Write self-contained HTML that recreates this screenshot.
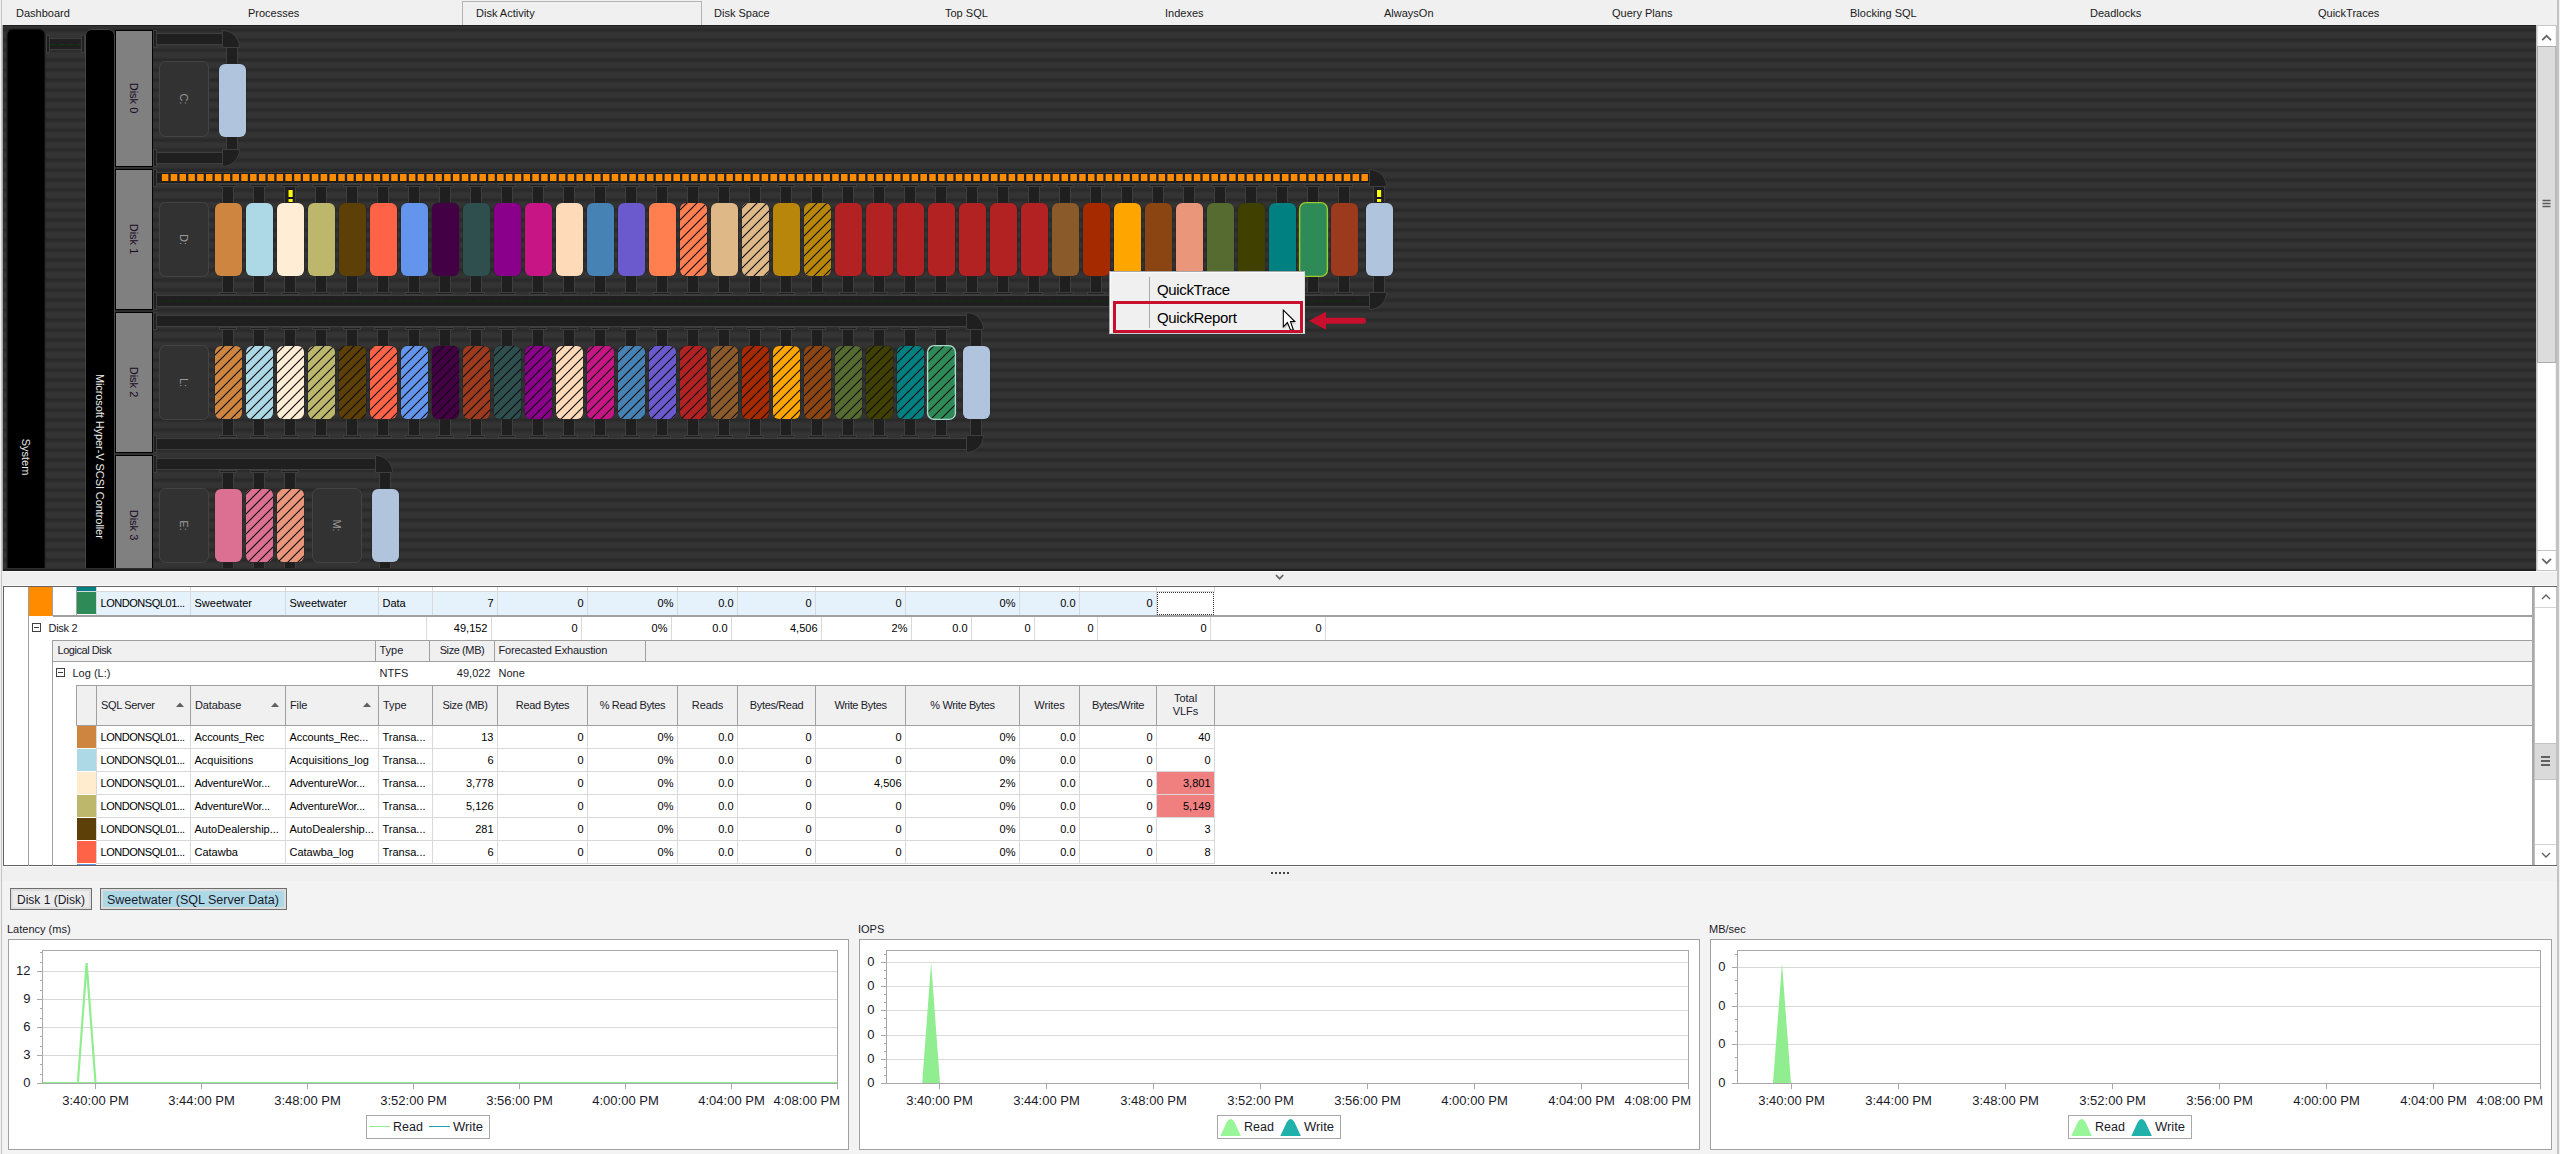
<!DOCTYPE html>
<html><head><meta charset="utf-8">
<style>
html,body{margin:0;padding:0;}
body{width:2560px;height:1154px;overflow:hidden;position:relative;background:#f0f0f0;font-family:'Liberation Sans', sans-serif;}
.t{position:absolute;white-space:nowrap;line-height:1;}
.r{text-align:right;}
.c{text-align:center;}
svg text{font-family:'Liberation Sans', sans-serif;}
</style></head><body>

<div style="position:absolute;left:0;top:0;width:2560px;height:25px;background:#f0f0f0"></div>
<div style="position:absolute;left:462px;top:1px;width:238px;height:24px;border:1px solid #b4b4b4;border-bottom:none;background:#f0f0f0"></div>
<div class="t" style="left:16px;top:8px;font-size:11px;color:#1a1a1a">Dashboard</div>
<div class="t" style="left:248px;top:8px;font-size:11px;color:#1a1a1a">Processes</div>
<div class="t" style="left:476px;top:8px;font-size:11px;color:#1a1a1a">Disk Activity</div>
<div class="t" style="left:714px;top:8px;font-size:11px;color:#1a1a1a">Disk Space</div>
<div class="t" style="left:945px;top:8px;font-size:11px;color:#1a1a1a">Top SQL</div>
<div class="t" style="left:1165px;top:8px;font-size:11px;color:#1a1a1a">Indexes</div>
<div class="t" style="left:1384px;top:8px;font-size:11px;color:#1a1a1a">AlwaysOn</div>
<div class="t" style="left:1612px;top:8px;font-size:11px;color:#1a1a1a">Query Plans</div>
<div class="t" style="left:1850px;top:8px;font-size:11px;color:#1a1a1a">Blocking SQL</div>
<div class="t" style="left:2090px;top:8px;font-size:11px;color:#1a1a1a">Deadlocks</div>
<div class="t" style="left:2318px;top:8px;font-size:11px;color:#1a1a1a">QuickTraces</div>
<div style="position:absolute;left:1px;top:0;width:1px;height:1154px;background:#c4c4c4"></div>
<div style="position:absolute;left:2557px;top:0;width:2px;height:1154px;background:#c4c4c4"></div>
<svg style="position:absolute;left:0;top:0" width="2560" height="571" viewBox="0 0 2560 571">
<defs>
<linearGradient id="stripe" x1="0" y1="0" x2="0" y2="1"><stop offset="0" stop-color="#343434"/><stop offset="0.2" stop-color="#333333"/><stop offset="0.5" stop-color="#282828"/><stop offset="0.8" stop-color="#333333"/><stop offset="1" stop-color="#343434"/></linearGradient>
<pattern id="stripes" patternUnits="userSpaceOnUse" x="0" y="25" width="2560" height="10"><rect width="2560" height="10" fill="url(#stripe)"/></pattern>
<pattern id="hatch" patternUnits="userSpaceOnUse" width="10" height="10"><path d="M-2.5,2.5 L2.5,-2.5 M-2.5,12.5 L12.5,-2.5 M7.5,12.5 L12.5,7.5" stroke="#0d0d0d" stroke-width="1.15"/></pattern>
<clipPath id="panel"><rect x="3" y="25" width="2533" height="543"/></clipPath>
</defs>
<rect x="3" y="25" width="2533" height="546" fill="url(#stripes)"/>
<rect x="3" y="25" width="2533" height="1" fill="#1e1e1e"/>
<rect x="3" y="569.5" width="2533" height="1.5" fill="#1c1c1c"/>
<rect x="2" y="25" width="1" height="546" fill="#a8a8a8"/>
<g clip-path="url(#panel)">
<rect x="7" y="29" width="38" height="860" rx="6" fill="#000" stroke="#222" stroke-width="1"/>
<text x="0" y="0" transform="translate(22,457) rotate(90)" text-anchor="middle" font-size="11" fill="#e8e8e8">System</text>
<rect x="85.5" y="29.5" width="29" height="871" rx="6" fill="#000" stroke="#444" stroke-width="1"/>
<text x="0" y="0" transform="translate(96,456.3) rotate(90)" text-anchor="middle" font-size="11" letter-spacing="-0.08" fill="#f0f0f0">Microsoft Hyper-V SCSI Controller</text>
<rect x="49" y="38" width="33" height="1" fill="#3e3e3e"/>
<rect x="49" y="39" width="33" height="10" fill="#1f1f1f"/>
<rect x="49" y="49" width="33" height="1" fill="#3e3e3e"/>
<line x1="50" y1="44.5" x2="81" y2="44.5" stroke="#0e3a0e" stroke-width="1" stroke-dasharray="6 2.8"/>
<rect x="46.5" y="35.5" width="3" height="17" rx="0" fill="#1f1f1f" stroke="#3e3e3e" stroke-width="1"/>
<rect x="81.5" y="35.5" width="3" height="17" rx="0" fill="#1f1f1f" stroke="#3e3e3e" stroke-width="1"/>
<rect x="115.5" y="30.5" width="37" height="136" rx="0" fill="#808080" stroke="#000" stroke-width="1"/>
<rect x="116" y="31" width="36" height="135" fill="none" stroke="#8c8c8c" stroke-width="1" transform="translate(0.5,0.5) scale(1)" stroke-dasharray="0" opacity="0"/>
<text x="0" y="0" transform="translate(130,98.0) rotate(90)" text-anchor="middle" font-size="11" fill="#1a0a26">Disk 0</text>
<rect x="115.5" y="169.5" width="37" height="140" rx="0" fill="#808080" stroke="#000" stroke-width="1"/>
<rect x="116" y="170" width="36" height="139" fill="none" stroke="#8c8c8c" stroke-width="1" transform="translate(0.5,0.5) scale(1)" stroke-dasharray="0" opacity="0"/>
<text x="0" y="0" transform="translate(130,239.0) rotate(90)" text-anchor="middle" font-size="11" fill="#1a0a26">Disk 1</text>
<rect x="115.5" y="312.5" width="37" height="140" rx="0" fill="#808080" stroke="#000" stroke-width="1"/>
<rect x="116" y="313" width="36" height="139" fill="none" stroke="#8c8c8c" stroke-width="1" transform="translate(0.5,0.5) scale(1)" stroke-dasharray="0" opacity="0"/>
<text x="0" y="0" transform="translate(130,382.0) rotate(90)" text-anchor="middle" font-size="11" fill="#1a0a26">Disk 2</text>
<rect x="115.5" y="455.5" width="37" height="445" rx="0" fill="#808080" stroke="#000" stroke-width="1"/>
<rect x="116" y="456" width="36" height="144" fill="none" stroke="#8c8c8c" stroke-width="1" transform="translate(0.5,0.5) scale(1)" stroke-dasharray="0" opacity="0"/>
<text x="0" y="0" transform="translate(130,525.0) rotate(90)" text-anchor="middle" font-size="11" fill="#1a0a26">Disk 3</text>
<rect x="157" y="33" width="65" height="1" fill="#3e3e3e"/>
<rect x="157" y="34" width="65" height="10" fill="#1f1f1f"/>
<rect x="157" y="44" width="65" height="1" fill="#3e3e3e"/>
<rect x="153.5" y="30.5" width="3" height="17" rx="0" fill="#1f1f1f" stroke="#3e3e3e" stroke-width="1"/>
<path d="M222.5,47.5 L222.5,30.5 A17,17 0 0 1 239.5,47.5 Z" fill="#1f1f1f" stroke="#3e3e3e" stroke-width="1"/>
<rect x="226" y="48" width="1" height="16" fill="#3e3e3e"/>
<rect x="227" y="48" width="10" height="16" fill="#1f1f1f"/>
<rect x="237" y="48" width="1" height="16" fill="#3e3e3e"/>
<rect x="159.5" y="61.5" width="49" height="75" rx="6" fill="#323232" stroke="#444444" stroke-width="1"/>
<text x="0" y="0" transform="translate(180,99.0) rotate(90)" text-anchor="middle" font-size="11" fill="#9a9a9a">C:</text>
<rect x="218.5" y="63.5" width="28" height="74" rx="6.5" fill="#262626"/>
<rect x="219" y="64" width="27" height="73" rx="6" fill="#b0c4de"/>
<rect x="226" y="137" width="1" height="12" fill="#3e3e3e"/>
<rect x="227" y="137" width="10" height="12" fill="#1f1f1f"/>
<rect x="237" y="137" width="1" height="12" fill="#3e3e3e"/>
<rect x="157" y="152" width="65" height="1" fill="#3e3e3e"/>
<rect x="157" y="153" width="65" height="10" fill="#1f1f1f"/>
<rect x="157" y="163" width="65" height="1" fill="#3e3e3e"/>
<rect x="153.5" y="149.5" width="3" height="17" rx="0" fill="#1f1f1f" stroke="#3e3e3e" stroke-width="1"/>
<path d="M222.5,149.5 L239.5,149.5 A17,17 0 0 1 222.5,166.5 Z" fill="#1f1f1f" stroke="#3e3e3e" stroke-width="1"/>
<rect x="157" y="172" width="1212" height="1" fill="#3e3e3e"/>
<rect x="157" y="173" width="1212" height="10" fill="#1f1f1f"/>
<rect x="157" y="183" width="1212" height="1" fill="#3e3e3e"/>
<rect x="161.90" y="174" width="6.50" height="7" fill="#ff8c00"/>
<rect x="170.72" y="174" width="6.50" height="7" fill="#ff8c00"/>
<rect x="179.54" y="174" width="6.50" height="7" fill="#ff8c00"/>
<rect x="188.36" y="174" width="6.50" height="7" fill="#ff8c00"/>
<rect x="197.18" y="174" width="6.50" height="7" fill="#ff8c00"/>
<rect x="206.00" y="174" width="6.50" height="7" fill="#ff8c00"/>
<rect x="214.82" y="174" width="6.50" height="7" fill="#ff8c00"/>
<rect x="223.64" y="174" width="6.50" height="7" fill="#ff8c00"/>
<rect x="232.46" y="174" width="6.50" height="7" fill="#ff8c00"/>
<rect x="241.28" y="174" width="6.50" height="7" fill="#ff8c00"/>
<rect x="250.10" y="174" width="6.50" height="7" fill="#ff8c00"/>
<rect x="258.92" y="174" width="6.50" height="7" fill="#ff8c00"/>
<rect x="267.74" y="174" width="6.50" height="7" fill="#ff8c00"/>
<rect x="276.56" y="174" width="6.50" height="7" fill="#ff8c00"/>
<rect x="285.38" y="174" width="6.50" height="7" fill="#ff8c00"/>
<rect x="294.20" y="174" width="6.50" height="7" fill="#ff8c00"/>
<rect x="303.02" y="174" width="6.50" height="7" fill="#ff8c00"/>
<rect x="311.84" y="174" width="6.50" height="7" fill="#ff8c00"/>
<rect x="320.66" y="174" width="6.50" height="7" fill="#ff8c00"/>
<rect x="329.48" y="174" width="6.50" height="7" fill="#ff8c00"/>
<rect x="338.30" y="174" width="6.50" height="7" fill="#ff8c00"/>
<rect x="347.12" y="174" width="6.50" height="7" fill="#ff8c00"/>
<rect x="355.94" y="174" width="6.50" height="7" fill="#ff8c00"/>
<rect x="364.76" y="174" width="6.50" height="7" fill="#ff8c00"/>
<rect x="373.58" y="174" width="6.50" height="7" fill="#ff8c00"/>
<rect x="382.40" y="174" width="6.50" height="7" fill="#ff8c00"/>
<rect x="391.22" y="174" width="6.50" height="7" fill="#ff8c00"/>
<rect x="400.04" y="174" width="6.50" height="7" fill="#ff8c00"/>
<rect x="408.86" y="174" width="6.50" height="7" fill="#ff8c00"/>
<rect x="417.68" y="174" width="6.50" height="7" fill="#ff8c00"/>
<rect x="426.50" y="174" width="6.50" height="7" fill="#ff8c00"/>
<rect x="435.32" y="174" width="6.50" height="7" fill="#ff8c00"/>
<rect x="444.14" y="174" width="6.50" height="7" fill="#ff8c00"/>
<rect x="452.96" y="174" width="6.50" height="7" fill="#ff8c00"/>
<rect x="461.78" y="174" width="6.50" height="7" fill="#ff8c00"/>
<rect x="470.60" y="174" width="6.50" height="7" fill="#ff8c00"/>
<rect x="479.42" y="174" width="6.50" height="7" fill="#ff8c00"/>
<rect x="488.24" y="174" width="6.50" height="7" fill="#ff8c00"/>
<rect x="497.06" y="174" width="6.50" height="7" fill="#ff8c00"/>
<rect x="505.88" y="174" width="6.50" height="7" fill="#ff8c00"/>
<rect x="514.70" y="174" width="6.50" height="7" fill="#ff8c00"/>
<rect x="523.52" y="174" width="6.50" height="7" fill="#ff8c00"/>
<rect x="532.34" y="174" width="6.50" height="7" fill="#ff8c00"/>
<rect x="541.16" y="174" width="6.50" height="7" fill="#ff8c00"/>
<rect x="549.98" y="174" width="6.50" height="7" fill="#ff8c00"/>
<rect x="558.80" y="174" width="6.50" height="7" fill="#ff8c00"/>
<rect x="567.62" y="174" width="6.50" height="7" fill="#ff8c00"/>
<rect x="576.44" y="174" width="6.50" height="7" fill="#ff8c00"/>
<rect x="585.26" y="174" width="6.50" height="7" fill="#ff8c00"/>
<rect x="594.08" y="174" width="6.50" height="7" fill="#ff8c00"/>
<rect x="602.90" y="174" width="6.50" height="7" fill="#ff8c00"/>
<rect x="611.72" y="174" width="6.50" height="7" fill="#ff8c00"/>
<rect x="620.54" y="174" width="6.50" height="7" fill="#ff8c00"/>
<rect x="629.36" y="174" width="6.50" height="7" fill="#ff8c00"/>
<rect x="638.18" y="174" width="6.50" height="7" fill="#ff8c00"/>
<rect x="647.00" y="174" width="6.50" height="7" fill="#ff8c00"/>
<rect x="655.82" y="174" width="6.50" height="7" fill="#ff8c00"/>
<rect x="664.64" y="174" width="6.50" height="7" fill="#ff8c00"/>
<rect x="673.46" y="174" width="6.50" height="7" fill="#ff8c00"/>
<rect x="682.28" y="174" width="6.50" height="7" fill="#ff8c00"/>
<rect x="691.10" y="174" width="6.50" height="7" fill="#ff8c00"/>
<rect x="699.92" y="174" width="6.50" height="7" fill="#ff8c00"/>
<rect x="708.74" y="174" width="6.50" height="7" fill="#ff8c00"/>
<rect x="717.56" y="174" width="6.50" height="7" fill="#ff8c00"/>
<rect x="726.38" y="174" width="6.50" height="7" fill="#ff8c00"/>
<rect x="735.20" y="174" width="6.50" height="7" fill="#ff8c00"/>
<rect x="744.02" y="174" width="6.50" height="7" fill="#ff8c00"/>
<rect x="752.84" y="174" width="6.50" height="7" fill="#ff8c00"/>
<rect x="761.66" y="174" width="6.50" height="7" fill="#ff8c00"/>
<rect x="770.48" y="174" width="6.50" height="7" fill="#ff8c00"/>
<rect x="779.30" y="174" width="6.50" height="7" fill="#ff8c00"/>
<rect x="788.12" y="174" width="6.50" height="7" fill="#ff8c00"/>
<rect x="796.94" y="174" width="6.50" height="7" fill="#ff8c00"/>
<rect x="805.76" y="174" width="6.50" height="7" fill="#ff8c00"/>
<rect x="814.58" y="174" width="6.50" height="7" fill="#ff8c00"/>
<rect x="823.40" y="174" width="6.50" height="7" fill="#ff8c00"/>
<rect x="832.22" y="174" width="6.50" height="7" fill="#ff8c00"/>
<rect x="841.04" y="174" width="6.50" height="7" fill="#ff8c00"/>
<rect x="849.86" y="174" width="6.50" height="7" fill="#ff8c00"/>
<rect x="858.68" y="174" width="6.50" height="7" fill="#ff8c00"/>
<rect x="867.50" y="174" width="6.50" height="7" fill="#ff8c00"/>
<rect x="876.32" y="174" width="6.50" height="7" fill="#ff8c00"/>
<rect x="885.14" y="174" width="6.50" height="7" fill="#ff8c00"/>
<rect x="893.96" y="174" width="6.50" height="7" fill="#ff8c00"/>
<rect x="902.78" y="174" width="6.50" height="7" fill="#ff8c00"/>
<rect x="911.60" y="174" width="6.50" height="7" fill="#ff8c00"/>
<rect x="920.42" y="174" width="6.50" height="7" fill="#ff8c00"/>
<rect x="929.24" y="174" width="6.50" height="7" fill="#ff8c00"/>
<rect x="938.06" y="174" width="6.50" height="7" fill="#ff8c00"/>
<rect x="946.88" y="174" width="6.50" height="7" fill="#ff8c00"/>
<rect x="955.70" y="174" width="6.50" height="7" fill="#ff8c00"/>
<rect x="964.52" y="174" width="6.50" height="7" fill="#ff8c00"/>
<rect x="973.34" y="174" width="6.50" height="7" fill="#ff8c00"/>
<rect x="982.16" y="174" width="6.50" height="7" fill="#ff8c00"/>
<rect x="990.98" y="174" width="6.50" height="7" fill="#ff8c00"/>
<rect x="999.80" y="174" width="6.50" height="7" fill="#ff8c00"/>
<rect x="1008.62" y="174" width="6.50" height="7" fill="#ff8c00"/>
<rect x="1017.44" y="174" width="6.50" height="7" fill="#ff8c00"/>
<rect x="1026.26" y="174" width="6.50" height="7" fill="#ff8c00"/>
<rect x="1035.08" y="174" width="6.50" height="7" fill="#ff8c00"/>
<rect x="1043.90" y="174" width="6.50" height="7" fill="#ff8c00"/>
<rect x="1052.72" y="174" width="6.50" height="7" fill="#ff8c00"/>
<rect x="1061.54" y="174" width="6.50" height="7" fill="#ff8c00"/>
<rect x="1070.36" y="174" width="6.50" height="7" fill="#ff8c00"/>
<rect x="1079.18" y="174" width="6.50" height="7" fill="#ff8c00"/>
<rect x="1088.00" y="174" width="6.50" height="7" fill="#ff8c00"/>
<rect x="1096.82" y="174" width="6.50" height="7" fill="#ff8c00"/>
<rect x="1105.64" y="174" width="6.50" height="7" fill="#ff8c00"/>
<rect x="1114.46" y="174" width="6.50" height="7" fill="#ff8c00"/>
<rect x="1123.28" y="174" width="6.50" height="7" fill="#ff8c00"/>
<rect x="1132.10" y="174" width="6.50" height="7" fill="#ff8c00"/>
<rect x="1140.92" y="174" width="6.50" height="7" fill="#ff8c00"/>
<rect x="1149.74" y="174" width="6.50" height="7" fill="#ff8c00"/>
<rect x="1158.56" y="174" width="6.50" height="7" fill="#ff8c00"/>
<rect x="1167.38" y="174" width="6.50" height="7" fill="#ff8c00"/>
<rect x="1176.20" y="174" width="6.50" height="7" fill="#ff8c00"/>
<rect x="1185.02" y="174" width="6.50" height="7" fill="#ff8c00"/>
<rect x="1193.84" y="174" width="6.50" height="7" fill="#ff8c00"/>
<rect x="1202.66" y="174" width="6.50" height="7" fill="#ff8c00"/>
<rect x="1211.48" y="174" width="6.50" height="7" fill="#ff8c00"/>
<rect x="1220.30" y="174" width="6.50" height="7" fill="#ff8c00"/>
<rect x="1229.12" y="174" width="6.50" height="7" fill="#ff8c00"/>
<rect x="1237.94" y="174" width="6.50" height="7" fill="#ff8c00"/>
<rect x="1246.76" y="174" width="6.50" height="7" fill="#ff8c00"/>
<rect x="1255.58" y="174" width="6.50" height="7" fill="#ff8c00"/>
<rect x="1264.40" y="174" width="6.50" height="7" fill="#ff8c00"/>
<rect x="1273.22" y="174" width="6.50" height="7" fill="#ff8c00"/>
<rect x="1282.04" y="174" width="6.50" height="7" fill="#ff8c00"/>
<rect x="1290.86" y="174" width="6.50" height="7" fill="#ff8c00"/>
<rect x="1299.68" y="174" width="6.50" height="7" fill="#ff8c00"/>
<rect x="1308.50" y="174" width="6.50" height="7" fill="#ff8c00"/>
<rect x="1317.32" y="174" width="6.50" height="7" fill="#ff8c00"/>
<rect x="1326.14" y="174" width="6.50" height="7" fill="#ff8c00"/>
<rect x="1334.96" y="174" width="6.50" height="7" fill="#ff8c00"/>
<rect x="1343.78" y="174" width="6.50" height="7" fill="#ff8c00"/>
<rect x="1352.60" y="174" width="6.50" height="7" fill="#ff8c00"/>
<rect x="1361.42" y="174" width="6.50" height="7" fill="#ff8c00"/>
<rect x="153.5" y="169.5" width="3" height="17" rx="0" fill="#1f1f1f" stroke="#3e3e3e" stroke-width="1"/>
<path d="M1369.5,186.5 L1369.5,169.5 A17,17 0 0 1 1386.5,186.5 Z" fill="#1f1f1f" stroke="#3e3e3e" stroke-width="1"/>
<rect x="219.5" y="184.5" width="17" height="2" rx="0" fill="#1f1f1f" stroke="#3e3e3e" stroke-width="1"/>
<rect x="222" y="187" width="1" height="16" fill="#3e3e3e"/>
<rect x="223" y="187" width="10" height="16" fill="#1f1f1f"/>
<rect x="233" y="187" width="1" height="16" fill="#3e3e3e"/>
<rect x="222" y="276" width="1" height="16" fill="#3e3e3e"/>
<rect x="223" y="276" width="10" height="16" fill="#1f1f1f"/>
<rect x="233" y="276" width="1" height="16" fill="#3e3e3e"/>
<rect x="219.5" y="292.5" width="17" height="2" rx="0" fill="#1f1f1f" stroke="#3e3e3e" stroke-width="1"/>
<rect x="250.5" y="184.5" width="17" height="2" rx="0" fill="#1f1f1f" stroke="#3e3e3e" stroke-width="1"/>
<rect x="253" y="187" width="1" height="16" fill="#3e3e3e"/>
<rect x="254" y="187" width="10" height="16" fill="#1f1f1f"/>
<rect x="264" y="187" width="1" height="16" fill="#3e3e3e"/>
<rect x="253" y="276" width="1" height="16" fill="#3e3e3e"/>
<rect x="254" y="276" width="10" height="16" fill="#1f1f1f"/>
<rect x="264" y="276" width="1" height="16" fill="#3e3e3e"/>
<rect x="250.5" y="292.5" width="17" height="2" rx="0" fill="#1f1f1f" stroke="#3e3e3e" stroke-width="1"/>
<rect x="281.5" y="184.5" width="17" height="2" rx="0" fill="#1f1f1f" stroke="#3e3e3e" stroke-width="1"/>
<rect x="284" y="187" width="1" height="16" fill="#3e3e3e"/>
<rect x="285" y="187" width="10" height="16" fill="#1f1f1f"/>
<rect x="295" y="187" width="1" height="16" fill="#3e3e3e"/>
<rect x="284" y="276" width="1" height="16" fill="#3e3e3e"/>
<rect x="285" y="276" width="10" height="16" fill="#1f1f1f"/>
<rect x="295" y="276" width="1" height="16" fill="#3e3e3e"/>
<rect x="281.5" y="292.5" width="17" height="2" rx="0" fill="#1f1f1f" stroke="#3e3e3e" stroke-width="1"/>
<rect x="312.5" y="184.5" width="17" height="2" rx="0" fill="#1f1f1f" stroke="#3e3e3e" stroke-width="1"/>
<rect x="315" y="187" width="1" height="16" fill="#3e3e3e"/>
<rect x="316" y="187" width="10" height="16" fill="#1f1f1f"/>
<rect x="326" y="187" width="1" height="16" fill="#3e3e3e"/>
<rect x="315" y="276" width="1" height="16" fill="#3e3e3e"/>
<rect x="316" y="276" width="10" height="16" fill="#1f1f1f"/>
<rect x="326" y="276" width="1" height="16" fill="#3e3e3e"/>
<rect x="312.5" y="292.5" width="17" height="2" rx="0" fill="#1f1f1f" stroke="#3e3e3e" stroke-width="1"/>
<rect x="343.5" y="184.5" width="17" height="2" rx="0" fill="#1f1f1f" stroke="#3e3e3e" stroke-width="1"/>
<rect x="346" y="187" width="1" height="16" fill="#3e3e3e"/>
<rect x="347" y="187" width="10" height="16" fill="#1f1f1f"/>
<rect x="357" y="187" width="1" height="16" fill="#3e3e3e"/>
<rect x="346" y="276" width="1" height="16" fill="#3e3e3e"/>
<rect x="347" y="276" width="10" height="16" fill="#1f1f1f"/>
<rect x="357" y="276" width="1" height="16" fill="#3e3e3e"/>
<rect x="343.5" y="292.5" width="17" height="2" rx="0" fill="#1f1f1f" stroke="#3e3e3e" stroke-width="1"/>
<rect x="374.5" y="184.5" width="17" height="2" rx="0" fill="#1f1f1f" stroke="#3e3e3e" stroke-width="1"/>
<rect x="377" y="187" width="1" height="16" fill="#3e3e3e"/>
<rect x="378" y="187" width="10" height="16" fill="#1f1f1f"/>
<rect x="388" y="187" width="1" height="16" fill="#3e3e3e"/>
<rect x="377" y="276" width="1" height="16" fill="#3e3e3e"/>
<rect x="378" y="276" width="10" height="16" fill="#1f1f1f"/>
<rect x="388" y="276" width="1" height="16" fill="#3e3e3e"/>
<rect x="374.5" y="292.5" width="17" height="2" rx="0" fill="#1f1f1f" stroke="#3e3e3e" stroke-width="1"/>
<rect x="405.5" y="184.5" width="17" height="2" rx="0" fill="#1f1f1f" stroke="#3e3e3e" stroke-width="1"/>
<rect x="408" y="187" width="1" height="16" fill="#3e3e3e"/>
<rect x="409" y="187" width="10" height="16" fill="#1f1f1f"/>
<rect x="419" y="187" width="1" height="16" fill="#3e3e3e"/>
<rect x="408" y="276" width="1" height="16" fill="#3e3e3e"/>
<rect x="409" y="276" width="10" height="16" fill="#1f1f1f"/>
<rect x="419" y="276" width="1" height="16" fill="#3e3e3e"/>
<rect x="405.5" y="292.5" width="17" height="2" rx="0" fill="#1f1f1f" stroke="#3e3e3e" stroke-width="1"/>
<rect x="436.5" y="184.5" width="17" height="2" rx="0" fill="#1f1f1f" stroke="#3e3e3e" stroke-width="1"/>
<rect x="439" y="187" width="1" height="16" fill="#3e3e3e"/>
<rect x="440" y="187" width="10" height="16" fill="#1f1f1f"/>
<rect x="450" y="187" width="1" height="16" fill="#3e3e3e"/>
<rect x="439" y="276" width="1" height="16" fill="#3e3e3e"/>
<rect x="440" y="276" width="10" height="16" fill="#1f1f1f"/>
<rect x="450" y="276" width="1" height="16" fill="#3e3e3e"/>
<rect x="436.5" y="292.5" width="17" height="2" rx="0" fill="#1f1f1f" stroke="#3e3e3e" stroke-width="1"/>
<rect x="467.5" y="184.5" width="17" height="2" rx="0" fill="#1f1f1f" stroke="#3e3e3e" stroke-width="1"/>
<rect x="470" y="187" width="1" height="16" fill="#3e3e3e"/>
<rect x="471" y="187" width="10" height="16" fill="#1f1f1f"/>
<rect x="481" y="187" width="1" height="16" fill="#3e3e3e"/>
<rect x="470" y="276" width="1" height="16" fill="#3e3e3e"/>
<rect x="471" y="276" width="10" height="16" fill="#1f1f1f"/>
<rect x="481" y="276" width="1" height="16" fill="#3e3e3e"/>
<rect x="467.5" y="292.5" width="17" height="2" rx="0" fill="#1f1f1f" stroke="#3e3e3e" stroke-width="1"/>
<rect x="498.5" y="184.5" width="17" height="2" rx="0" fill="#1f1f1f" stroke="#3e3e3e" stroke-width="1"/>
<rect x="501" y="187" width="1" height="16" fill="#3e3e3e"/>
<rect x="502" y="187" width="10" height="16" fill="#1f1f1f"/>
<rect x="512" y="187" width="1" height="16" fill="#3e3e3e"/>
<rect x="501" y="276" width="1" height="16" fill="#3e3e3e"/>
<rect x="502" y="276" width="10" height="16" fill="#1f1f1f"/>
<rect x="512" y="276" width="1" height="16" fill="#3e3e3e"/>
<rect x="498.5" y="292.5" width="17" height="2" rx="0" fill="#1f1f1f" stroke="#3e3e3e" stroke-width="1"/>
<rect x="529.5" y="184.5" width="17" height="2" rx="0" fill="#1f1f1f" stroke="#3e3e3e" stroke-width="1"/>
<rect x="532" y="187" width="1" height="16" fill="#3e3e3e"/>
<rect x="533" y="187" width="10" height="16" fill="#1f1f1f"/>
<rect x="543" y="187" width="1" height="16" fill="#3e3e3e"/>
<rect x="532" y="276" width="1" height="16" fill="#3e3e3e"/>
<rect x="533" y="276" width="10" height="16" fill="#1f1f1f"/>
<rect x="543" y="276" width="1" height="16" fill="#3e3e3e"/>
<rect x="529.5" y="292.5" width="17" height="2" rx="0" fill="#1f1f1f" stroke="#3e3e3e" stroke-width="1"/>
<rect x="560.5" y="184.5" width="17" height="2" rx="0" fill="#1f1f1f" stroke="#3e3e3e" stroke-width="1"/>
<rect x="563" y="187" width="1" height="16" fill="#3e3e3e"/>
<rect x="564" y="187" width="10" height="16" fill="#1f1f1f"/>
<rect x="574" y="187" width="1" height="16" fill="#3e3e3e"/>
<rect x="563" y="276" width="1" height="16" fill="#3e3e3e"/>
<rect x="564" y="276" width="10" height="16" fill="#1f1f1f"/>
<rect x="574" y="276" width="1" height="16" fill="#3e3e3e"/>
<rect x="560.5" y="292.5" width="17" height="2" rx="0" fill="#1f1f1f" stroke="#3e3e3e" stroke-width="1"/>
<rect x="591.5" y="184.5" width="17" height="2" rx="0" fill="#1f1f1f" stroke="#3e3e3e" stroke-width="1"/>
<rect x="594" y="187" width="1" height="16" fill="#3e3e3e"/>
<rect x="595" y="187" width="10" height="16" fill="#1f1f1f"/>
<rect x="605" y="187" width="1" height="16" fill="#3e3e3e"/>
<rect x="594" y="276" width="1" height="16" fill="#3e3e3e"/>
<rect x="595" y="276" width="10" height="16" fill="#1f1f1f"/>
<rect x="605" y="276" width="1" height="16" fill="#3e3e3e"/>
<rect x="591.5" y="292.5" width="17" height="2" rx="0" fill="#1f1f1f" stroke="#3e3e3e" stroke-width="1"/>
<rect x="622.5" y="184.5" width="17" height="2" rx="0" fill="#1f1f1f" stroke="#3e3e3e" stroke-width="1"/>
<rect x="625" y="187" width="1" height="16" fill="#3e3e3e"/>
<rect x="626" y="187" width="10" height="16" fill="#1f1f1f"/>
<rect x="636" y="187" width="1" height="16" fill="#3e3e3e"/>
<rect x="625" y="276" width="1" height="16" fill="#3e3e3e"/>
<rect x="626" y="276" width="10" height="16" fill="#1f1f1f"/>
<rect x="636" y="276" width="1" height="16" fill="#3e3e3e"/>
<rect x="622.5" y="292.5" width="17" height="2" rx="0" fill="#1f1f1f" stroke="#3e3e3e" stroke-width="1"/>
<rect x="653.5" y="184.5" width="17" height="2" rx="0" fill="#1f1f1f" stroke="#3e3e3e" stroke-width="1"/>
<rect x="656" y="187" width="1" height="16" fill="#3e3e3e"/>
<rect x="657" y="187" width="10" height="16" fill="#1f1f1f"/>
<rect x="667" y="187" width="1" height="16" fill="#3e3e3e"/>
<rect x="656" y="276" width="1" height="16" fill="#3e3e3e"/>
<rect x="657" y="276" width="10" height="16" fill="#1f1f1f"/>
<rect x="667" y="276" width="1" height="16" fill="#3e3e3e"/>
<rect x="653.5" y="292.5" width="17" height="2" rx="0" fill="#1f1f1f" stroke="#3e3e3e" stroke-width="1"/>
<rect x="684.5" y="184.5" width="17" height="2" rx="0" fill="#1f1f1f" stroke="#3e3e3e" stroke-width="1"/>
<rect x="687" y="187" width="1" height="16" fill="#3e3e3e"/>
<rect x="688" y="187" width="10" height="16" fill="#1f1f1f"/>
<rect x="698" y="187" width="1" height="16" fill="#3e3e3e"/>
<rect x="687" y="276" width="1" height="16" fill="#3e3e3e"/>
<rect x="688" y="276" width="10" height="16" fill="#1f1f1f"/>
<rect x="698" y="276" width="1" height="16" fill="#3e3e3e"/>
<rect x="684.5" y="292.5" width="17" height="2" rx="0" fill="#1f1f1f" stroke="#3e3e3e" stroke-width="1"/>
<rect x="715.5" y="184.5" width="17" height="2" rx="0" fill="#1f1f1f" stroke="#3e3e3e" stroke-width="1"/>
<rect x="718" y="187" width="1" height="16" fill="#3e3e3e"/>
<rect x="719" y="187" width="10" height="16" fill="#1f1f1f"/>
<rect x="729" y="187" width="1" height="16" fill="#3e3e3e"/>
<rect x="718" y="276" width="1" height="16" fill="#3e3e3e"/>
<rect x="719" y="276" width="10" height="16" fill="#1f1f1f"/>
<rect x="729" y="276" width="1" height="16" fill="#3e3e3e"/>
<rect x="715.5" y="292.5" width="17" height="2" rx="0" fill="#1f1f1f" stroke="#3e3e3e" stroke-width="1"/>
<rect x="746.5" y="184.5" width="17" height="2" rx="0" fill="#1f1f1f" stroke="#3e3e3e" stroke-width="1"/>
<rect x="749" y="187" width="1" height="16" fill="#3e3e3e"/>
<rect x="750" y="187" width="10" height="16" fill="#1f1f1f"/>
<rect x="760" y="187" width="1" height="16" fill="#3e3e3e"/>
<rect x="749" y="276" width="1" height="16" fill="#3e3e3e"/>
<rect x="750" y="276" width="10" height="16" fill="#1f1f1f"/>
<rect x="760" y="276" width="1" height="16" fill="#3e3e3e"/>
<rect x="746.5" y="292.5" width="17" height="2" rx="0" fill="#1f1f1f" stroke="#3e3e3e" stroke-width="1"/>
<rect x="777.5" y="184.5" width="17" height="2" rx="0" fill="#1f1f1f" stroke="#3e3e3e" stroke-width="1"/>
<rect x="780" y="187" width="1" height="16" fill="#3e3e3e"/>
<rect x="781" y="187" width="10" height="16" fill="#1f1f1f"/>
<rect x="791" y="187" width="1" height="16" fill="#3e3e3e"/>
<rect x="780" y="276" width="1" height="16" fill="#3e3e3e"/>
<rect x="781" y="276" width="10" height="16" fill="#1f1f1f"/>
<rect x="791" y="276" width="1" height="16" fill="#3e3e3e"/>
<rect x="777.5" y="292.5" width="17" height="2" rx="0" fill="#1f1f1f" stroke="#3e3e3e" stroke-width="1"/>
<rect x="808.5" y="184.5" width="17" height="2" rx="0" fill="#1f1f1f" stroke="#3e3e3e" stroke-width="1"/>
<rect x="811" y="187" width="1" height="16" fill="#3e3e3e"/>
<rect x="812" y="187" width="10" height="16" fill="#1f1f1f"/>
<rect x="822" y="187" width="1" height="16" fill="#3e3e3e"/>
<rect x="811" y="276" width="1" height="16" fill="#3e3e3e"/>
<rect x="812" y="276" width="10" height="16" fill="#1f1f1f"/>
<rect x="822" y="276" width="1" height="16" fill="#3e3e3e"/>
<rect x="808.5" y="292.5" width="17" height="2" rx="0" fill="#1f1f1f" stroke="#3e3e3e" stroke-width="1"/>
<rect x="839.5" y="184.5" width="17" height="2" rx="0" fill="#1f1f1f" stroke="#3e3e3e" stroke-width="1"/>
<rect x="842" y="187" width="1" height="16" fill="#3e3e3e"/>
<rect x="843" y="187" width="10" height="16" fill="#1f1f1f"/>
<rect x="853" y="187" width="1" height="16" fill="#3e3e3e"/>
<rect x="842" y="276" width="1" height="16" fill="#3e3e3e"/>
<rect x="843" y="276" width="10" height="16" fill="#1f1f1f"/>
<rect x="853" y="276" width="1" height="16" fill="#3e3e3e"/>
<rect x="839.5" y="292.5" width="17" height="2" rx="0" fill="#1f1f1f" stroke="#3e3e3e" stroke-width="1"/>
<rect x="870.5" y="184.5" width="17" height="2" rx="0" fill="#1f1f1f" stroke="#3e3e3e" stroke-width="1"/>
<rect x="873" y="187" width="1" height="16" fill="#3e3e3e"/>
<rect x="874" y="187" width="10" height="16" fill="#1f1f1f"/>
<rect x="884" y="187" width="1" height="16" fill="#3e3e3e"/>
<rect x="873" y="276" width="1" height="16" fill="#3e3e3e"/>
<rect x="874" y="276" width="10" height="16" fill="#1f1f1f"/>
<rect x="884" y="276" width="1" height="16" fill="#3e3e3e"/>
<rect x="870.5" y="292.5" width="17" height="2" rx="0" fill="#1f1f1f" stroke="#3e3e3e" stroke-width="1"/>
<rect x="901.5" y="184.5" width="17" height="2" rx="0" fill="#1f1f1f" stroke="#3e3e3e" stroke-width="1"/>
<rect x="904" y="187" width="1" height="16" fill="#3e3e3e"/>
<rect x="905" y="187" width="10" height="16" fill="#1f1f1f"/>
<rect x="915" y="187" width="1" height="16" fill="#3e3e3e"/>
<rect x="904" y="276" width="1" height="16" fill="#3e3e3e"/>
<rect x="905" y="276" width="10" height="16" fill="#1f1f1f"/>
<rect x="915" y="276" width="1" height="16" fill="#3e3e3e"/>
<rect x="901.5" y="292.5" width="17" height="2" rx="0" fill="#1f1f1f" stroke="#3e3e3e" stroke-width="1"/>
<rect x="932.5" y="184.5" width="17" height="2" rx="0" fill="#1f1f1f" stroke="#3e3e3e" stroke-width="1"/>
<rect x="935" y="187" width="1" height="16" fill="#3e3e3e"/>
<rect x="936" y="187" width="10" height="16" fill="#1f1f1f"/>
<rect x="946" y="187" width="1" height="16" fill="#3e3e3e"/>
<rect x="935" y="276" width="1" height="16" fill="#3e3e3e"/>
<rect x="936" y="276" width="10" height="16" fill="#1f1f1f"/>
<rect x="946" y="276" width="1" height="16" fill="#3e3e3e"/>
<rect x="932.5" y="292.5" width="17" height="2" rx="0" fill="#1f1f1f" stroke="#3e3e3e" stroke-width="1"/>
<rect x="963.5" y="184.5" width="17" height="2" rx="0" fill="#1f1f1f" stroke="#3e3e3e" stroke-width="1"/>
<rect x="966" y="187" width="1" height="16" fill="#3e3e3e"/>
<rect x="967" y="187" width="10" height="16" fill="#1f1f1f"/>
<rect x="977" y="187" width="1" height="16" fill="#3e3e3e"/>
<rect x="966" y="276" width="1" height="16" fill="#3e3e3e"/>
<rect x="967" y="276" width="10" height="16" fill="#1f1f1f"/>
<rect x="977" y="276" width="1" height="16" fill="#3e3e3e"/>
<rect x="963.5" y="292.5" width="17" height="2" rx="0" fill="#1f1f1f" stroke="#3e3e3e" stroke-width="1"/>
<rect x="994.5" y="184.5" width="17" height="2" rx="0" fill="#1f1f1f" stroke="#3e3e3e" stroke-width="1"/>
<rect x="997" y="187" width="1" height="16" fill="#3e3e3e"/>
<rect x="998" y="187" width="10" height="16" fill="#1f1f1f"/>
<rect x="1008" y="187" width="1" height="16" fill="#3e3e3e"/>
<rect x="997" y="276" width="1" height="16" fill="#3e3e3e"/>
<rect x="998" y="276" width="10" height="16" fill="#1f1f1f"/>
<rect x="1008" y="276" width="1" height="16" fill="#3e3e3e"/>
<rect x="994.5" y="292.5" width="17" height="2" rx="0" fill="#1f1f1f" stroke="#3e3e3e" stroke-width="1"/>
<rect x="1025.5" y="184.5" width="17" height="2" rx="0" fill="#1f1f1f" stroke="#3e3e3e" stroke-width="1"/>
<rect x="1028" y="187" width="1" height="16" fill="#3e3e3e"/>
<rect x="1029" y="187" width="10" height="16" fill="#1f1f1f"/>
<rect x="1039" y="187" width="1" height="16" fill="#3e3e3e"/>
<rect x="1028" y="276" width="1" height="16" fill="#3e3e3e"/>
<rect x="1029" y="276" width="10" height="16" fill="#1f1f1f"/>
<rect x="1039" y="276" width="1" height="16" fill="#3e3e3e"/>
<rect x="1025.5" y="292.5" width="17" height="2" rx="0" fill="#1f1f1f" stroke="#3e3e3e" stroke-width="1"/>
<rect x="1056.5" y="184.5" width="17" height="2" rx="0" fill="#1f1f1f" stroke="#3e3e3e" stroke-width="1"/>
<rect x="1059" y="187" width="1" height="16" fill="#3e3e3e"/>
<rect x="1060" y="187" width="10" height="16" fill="#1f1f1f"/>
<rect x="1070" y="187" width="1" height="16" fill="#3e3e3e"/>
<rect x="1059" y="276" width="1" height="16" fill="#3e3e3e"/>
<rect x="1060" y="276" width="10" height="16" fill="#1f1f1f"/>
<rect x="1070" y="276" width="1" height="16" fill="#3e3e3e"/>
<rect x="1056.5" y="292.5" width="17" height="2" rx="0" fill="#1f1f1f" stroke="#3e3e3e" stroke-width="1"/>
<rect x="1087.5" y="184.5" width="17" height="2" rx="0" fill="#1f1f1f" stroke="#3e3e3e" stroke-width="1"/>
<rect x="1090" y="187" width="1" height="16" fill="#3e3e3e"/>
<rect x="1091" y="187" width="10" height="16" fill="#1f1f1f"/>
<rect x="1101" y="187" width="1" height="16" fill="#3e3e3e"/>
<rect x="1090" y="276" width="1" height="16" fill="#3e3e3e"/>
<rect x="1091" y="276" width="10" height="16" fill="#1f1f1f"/>
<rect x="1101" y="276" width="1" height="16" fill="#3e3e3e"/>
<rect x="1087.5" y="292.5" width="17" height="2" rx="0" fill="#1f1f1f" stroke="#3e3e3e" stroke-width="1"/>
<rect x="1118.5" y="184.5" width="17" height="2" rx="0" fill="#1f1f1f" stroke="#3e3e3e" stroke-width="1"/>
<rect x="1121" y="187" width="1" height="16" fill="#3e3e3e"/>
<rect x="1122" y="187" width="10" height="16" fill="#1f1f1f"/>
<rect x="1132" y="187" width="1" height="16" fill="#3e3e3e"/>
<rect x="1121" y="276" width="1" height="16" fill="#3e3e3e"/>
<rect x="1122" y="276" width="10" height="16" fill="#1f1f1f"/>
<rect x="1132" y="276" width="1" height="16" fill="#3e3e3e"/>
<rect x="1118.5" y="292.5" width="17" height="2" rx="0" fill="#1f1f1f" stroke="#3e3e3e" stroke-width="1"/>
<rect x="1149.5" y="184.5" width="17" height="2" rx="0" fill="#1f1f1f" stroke="#3e3e3e" stroke-width="1"/>
<rect x="1152" y="187" width="1" height="16" fill="#3e3e3e"/>
<rect x="1153" y="187" width="10" height="16" fill="#1f1f1f"/>
<rect x="1163" y="187" width="1" height="16" fill="#3e3e3e"/>
<rect x="1152" y="276" width="1" height="16" fill="#3e3e3e"/>
<rect x="1153" y="276" width="10" height="16" fill="#1f1f1f"/>
<rect x="1163" y="276" width="1" height="16" fill="#3e3e3e"/>
<rect x="1149.5" y="292.5" width="17" height="2" rx="0" fill="#1f1f1f" stroke="#3e3e3e" stroke-width="1"/>
<rect x="1180.5" y="184.5" width="17" height="2" rx="0" fill="#1f1f1f" stroke="#3e3e3e" stroke-width="1"/>
<rect x="1183" y="187" width="1" height="16" fill="#3e3e3e"/>
<rect x="1184" y="187" width="10" height="16" fill="#1f1f1f"/>
<rect x="1194" y="187" width="1" height="16" fill="#3e3e3e"/>
<rect x="1183" y="276" width="1" height="16" fill="#3e3e3e"/>
<rect x="1184" y="276" width="10" height="16" fill="#1f1f1f"/>
<rect x="1194" y="276" width="1" height="16" fill="#3e3e3e"/>
<rect x="1180.5" y="292.5" width="17" height="2" rx="0" fill="#1f1f1f" stroke="#3e3e3e" stroke-width="1"/>
<rect x="1211.5" y="184.5" width="17" height="2" rx="0" fill="#1f1f1f" stroke="#3e3e3e" stroke-width="1"/>
<rect x="1214" y="187" width="1" height="16" fill="#3e3e3e"/>
<rect x="1215" y="187" width="10" height="16" fill="#1f1f1f"/>
<rect x="1225" y="187" width="1" height="16" fill="#3e3e3e"/>
<rect x="1214" y="276" width="1" height="16" fill="#3e3e3e"/>
<rect x="1215" y="276" width="10" height="16" fill="#1f1f1f"/>
<rect x="1225" y="276" width="1" height="16" fill="#3e3e3e"/>
<rect x="1211.5" y="292.5" width="17" height="2" rx="0" fill="#1f1f1f" stroke="#3e3e3e" stroke-width="1"/>
<rect x="1242.5" y="184.5" width="17" height="2" rx="0" fill="#1f1f1f" stroke="#3e3e3e" stroke-width="1"/>
<rect x="1245" y="187" width="1" height="16" fill="#3e3e3e"/>
<rect x="1246" y="187" width="10" height="16" fill="#1f1f1f"/>
<rect x="1256" y="187" width="1" height="16" fill="#3e3e3e"/>
<rect x="1245" y="276" width="1" height="16" fill="#3e3e3e"/>
<rect x="1246" y="276" width="10" height="16" fill="#1f1f1f"/>
<rect x="1256" y="276" width="1" height="16" fill="#3e3e3e"/>
<rect x="1242.5" y="292.5" width="17" height="2" rx="0" fill="#1f1f1f" stroke="#3e3e3e" stroke-width="1"/>
<rect x="1273.5" y="184.5" width="17" height="2" rx="0" fill="#1f1f1f" stroke="#3e3e3e" stroke-width="1"/>
<rect x="1276" y="187" width="1" height="16" fill="#3e3e3e"/>
<rect x="1277" y="187" width="10" height="16" fill="#1f1f1f"/>
<rect x="1287" y="187" width="1" height="16" fill="#3e3e3e"/>
<rect x="1276" y="276" width="1" height="16" fill="#3e3e3e"/>
<rect x="1277" y="276" width="10" height="16" fill="#1f1f1f"/>
<rect x="1287" y="276" width="1" height="16" fill="#3e3e3e"/>
<rect x="1273.5" y="292.5" width="17" height="2" rx="0" fill="#1f1f1f" stroke="#3e3e3e" stroke-width="1"/>
<rect x="1304.5" y="184.5" width="17" height="2" rx="0" fill="#1f1f1f" stroke="#3e3e3e" stroke-width="1"/>
<rect x="1307" y="187" width="1" height="16" fill="#3e3e3e"/>
<rect x="1308" y="187" width="10" height="16" fill="#1f1f1f"/>
<rect x="1318" y="187" width="1" height="16" fill="#3e3e3e"/>
<rect x="1307" y="276" width="1" height="16" fill="#3e3e3e"/>
<rect x="1308" y="276" width="10" height="16" fill="#1f1f1f"/>
<rect x="1318" y="276" width="1" height="16" fill="#3e3e3e"/>
<rect x="1304.5" y="292.5" width="17" height="2" rx="0" fill="#1f1f1f" stroke="#3e3e3e" stroke-width="1"/>
<rect x="1335.5" y="184.5" width="17" height="2" rx="0" fill="#1f1f1f" stroke="#3e3e3e" stroke-width="1"/>
<rect x="1338" y="187" width="1" height="16" fill="#3e3e3e"/>
<rect x="1339" y="187" width="10" height="16" fill="#1f1f1f"/>
<rect x="1349" y="187" width="1" height="16" fill="#3e3e3e"/>
<rect x="1338" y="276" width="1" height="16" fill="#3e3e3e"/>
<rect x="1339" y="276" width="10" height="16" fill="#1f1f1f"/>
<rect x="1349" y="276" width="1" height="16" fill="#3e3e3e"/>
<rect x="1335.5" y="292.5" width="17" height="2" rx="0" fill="#1f1f1f" stroke="#3e3e3e" stroke-width="1"/>
<rect x="1373" y="187" width="1" height="16" fill="#3e3e3e"/>
<rect x="1374" y="187" width="10" height="16" fill="#1f1f1f"/>
<rect x="1384" y="187" width="1" height="16" fill="#3e3e3e"/>
<rect x="1373" y="276" width="1" height="16" fill="#3e3e3e"/>
<rect x="1374" y="276" width="10" height="16" fill="#1f1f1f"/>
<rect x="1384" y="276" width="1" height="16" fill="#3e3e3e"/>
<rect x="157" y="295" width="1212" height="1" fill="#3e3e3e"/>
<rect x="157" y="296" width="1212" height="10" fill="#1f1f1f"/>
<rect x="157" y="306" width="1212" height="1" fill="#3e3e3e"/>
<line x1="158" y1="301" x2="1369" y2="301" stroke="#133013" stroke-width="1" stroke-dasharray="6.1 2.7"/>
<rect x="153.5" y="292.5" width="3" height="17" rx="0" fill="#1f1f1f" stroke="#3e3e3e" stroke-width="1"/>
<path d="M1369.5,292.5 L1386.5,292.5 A17,17 0 0 1 1369.5,309.5 Z" fill="#1f1f1f" stroke="#3e3e3e" stroke-width="1"/>
<rect x="159.5" y="202.5" width="49" height="74" rx="6" fill="#323232" stroke="#444444" stroke-width="1"/>
<text x="0" y="0" transform="translate(180,239.5) rotate(90)" text-anchor="middle" font-size="11" fill="#9a9a9a">D:</text>
<rect x="214.5" y="202.5" width="28" height="74" rx="6.5" fill="#262626"/>
<rect x="215" y="203" width="27" height="73" rx="6" fill="#cd853f"/>
<rect x="245.5" y="202.5" width="28" height="74" rx="6.5" fill="#262626"/>
<rect x="246" y="203" width="27" height="73" rx="6" fill="#add8e6"/>
<rect x="276.5" y="202.5" width="28" height="74" rx="6.5" fill="#262626"/>
<rect x="277" y="203" width="27" height="73" rx="6" fill="#ffedd6"/>
<rect x="307.5" y="202.5" width="28" height="74" rx="6.5" fill="#262626"/>
<rect x="308" y="203" width="27" height="73" rx="6" fill="#bdb76b"/>
<rect x="338.5" y="202.5" width="28" height="74" rx="6.5" fill="#262626"/>
<rect x="339" y="203" width="27" height="73" rx="6" fill="#5c4008"/>
<rect x="369.5" y="202.5" width="28" height="74" rx="6.5" fill="#262626"/>
<rect x="370" y="203" width="27" height="73" rx="6" fill="#ff6347"/>
<rect x="400.5" y="202.5" width="28" height="74" rx="6.5" fill="#262626"/>
<rect x="401" y="203" width="27" height="73" rx="6" fill="#6495ed"/>
<rect x="431.5" y="202.5" width="28" height="74" rx="6.5" fill="#262626"/>
<rect x="432" y="203" width="27" height="73" rx="6" fill="#440044"/>
<rect x="462.5" y="202.5" width="28" height="74" rx="6.5" fill="#262626"/>
<rect x="463" y="203" width="27" height="73" rx="6" fill="#2f4f4f"/>
<rect x="493.5" y="202.5" width="28" height="74" rx="6.5" fill="#262626"/>
<rect x="494" y="203" width="27" height="73" rx="6" fill="#8b008b"/>
<rect x="524.5" y="202.5" width="28" height="74" rx="6.5" fill="#262626"/>
<rect x="525" y="203" width="27" height="73" rx="6" fill="#c71585"/>
<rect x="555.5" y="202.5" width="28" height="74" rx="6.5" fill="#262626"/>
<rect x="556" y="203" width="27" height="73" rx="6" fill="#ffdab9"/>
<rect x="586.5" y="202.5" width="28" height="74" rx="6.5" fill="#262626"/>
<rect x="587" y="203" width="27" height="73" rx="6" fill="#4682b4"/>
<rect x="617.5" y="202.5" width="28" height="74" rx="6.5" fill="#262626"/>
<rect x="618" y="203" width="27" height="73" rx="6" fill="#6a5acd"/>
<rect x="648.5" y="202.5" width="28" height="74" rx="6.5" fill="#262626"/>
<rect x="649" y="203" width="27" height="73" rx="6" fill="#ff7f50"/>
<rect x="679.5" y="202.5" width="28" height="74" rx="6.5" fill="#262626"/>
<rect x="680" y="203" width="27" height="73" rx="6" fill="#ff7f50"/>
<rect x="680" y="203" width="27" height="73" rx="6" fill="url(#hatch)"/>
<rect x="710.5" y="202.5" width="28" height="74" rx="6.5" fill="#262626"/>
<rect x="711" y="203" width="27" height="73" rx="6" fill="#deb887"/>
<rect x="741.5" y="202.5" width="28" height="74" rx="6.5" fill="#262626"/>
<rect x="742" y="203" width="27" height="73" rx="6" fill="#deb887"/>
<rect x="742" y="203" width="27" height="73" rx="6" fill="url(#hatch)"/>
<rect x="772.5" y="202.5" width="28" height="74" rx="6.5" fill="#262626"/>
<rect x="773" y="203" width="27" height="73" rx="6" fill="#b8860b"/>
<rect x="803.5" y="202.5" width="28" height="74" rx="6.5" fill="#262626"/>
<rect x="804" y="203" width="27" height="73" rx="6" fill="#b8860b"/>
<rect x="804" y="203" width="27" height="73" rx="6" fill="url(#hatch)"/>
<rect x="834.5" y="202.5" width="28" height="74" rx="6.5" fill="#262626"/>
<rect x="835" y="203" width="27" height="73" rx="6" fill="#b22222"/>
<rect x="865.5" y="202.5" width="28" height="74" rx="6.5" fill="#262626"/>
<rect x="866" y="203" width="27" height="73" rx="6" fill="#b22222"/>
<rect x="896.5" y="202.5" width="28" height="74" rx="6.5" fill="#262626"/>
<rect x="897" y="203" width="27" height="73" rx="6" fill="#b22222"/>
<rect x="927.5" y="202.5" width="28" height="74" rx="6.5" fill="#262626"/>
<rect x="928" y="203" width="27" height="73" rx="6" fill="#b22222"/>
<rect x="958.5" y="202.5" width="28" height="74" rx="6.5" fill="#262626"/>
<rect x="959" y="203" width="27" height="73" rx="6" fill="#b22222"/>
<rect x="989.5" y="202.5" width="28" height="74" rx="6.5" fill="#262626"/>
<rect x="990" y="203" width="27" height="73" rx="6" fill="#b22222"/>
<rect x="1020.5" y="202.5" width="28" height="74" rx="6.5" fill="#262626"/>
<rect x="1021" y="203" width="27" height="73" rx="6" fill="#b22222"/>
<rect x="1051.5" y="202.5" width="28" height="74" rx="6.5" fill="#262626"/>
<rect x="1052" y="203" width="27" height="73" rx="6" fill="#8b5a2b"/>
<rect x="1082.5" y="202.5" width="28" height="74" rx="6.5" fill="#262626"/>
<rect x="1083" y="203" width="27" height="73" rx="6" fill="#a52a00"/>
<rect x="1113.5" y="202.5" width="28" height="74" rx="6.5" fill="#262626"/>
<rect x="1114" y="203" width="27" height="73" rx="6" fill="#ffa500"/>
<rect x="1144.5" y="202.5" width="28" height="74" rx="6.5" fill="#262626"/>
<rect x="1145" y="203" width="27" height="73" rx="6" fill="#8b4513"/>
<rect x="1175.5" y="202.5" width="28" height="74" rx="6.5" fill="#262626"/>
<rect x="1176" y="203" width="27" height="73" rx="6" fill="#e9967a"/>
<rect x="1206.5" y="202.5" width="28" height="74" rx="6.5" fill="#262626"/>
<rect x="1207" y="203" width="27" height="73" rx="6" fill="#556b2f"/>
<rect x="1237.5" y="202.5" width="28" height="74" rx="6.5" fill="#262626"/>
<rect x="1238" y="203" width="27" height="73" rx="6" fill="#404000"/>
<rect x="1268.5" y="202.5" width="28" height="74" rx="6.5" fill="#262626"/>
<rect x="1269" y="203" width="27" height="73" rx="6" fill="#008080"/>
<rect x="1299.5" y="202.5" width="28" height="74" rx="6.5" fill="#262626"/>
<rect x="1300" y="203" width="27" height="73" rx="6" fill="#2e8b57"/>
<rect x="1299.6" y="202.6" width="27.8" height="73.8" rx="6.5" fill="none" stroke="#9acd32" stroke-width="1.4"/>
<rect x="1330.5" y="202.5" width="28" height="74" rx="6.5" fill="#262626"/>
<rect x="1331" y="203" width="27" height="73" rx="6" fill="#9b3a1d"/>
<rect x="1365.5" y="202.5" width="28" height="74" rx="6.5" fill="#262626"/>
<rect x="1366" y="203" width="27" height="73" rx="6" fill="#b0c4de"/>
<rect x="287.9" y="189.4" width="5.2" height="8.2" fill="#0a0a30"/>
<rect x="288.5" y="190" width="4.2" height="7" fill="#ffff00"/>
<rect x="287.9" y="198.4" width="5.2" height="4" fill="#0a0a30"/>
<rect x="288.5" y="199" width="4.2" height="3" fill="#ffff00"/>
<rect x="1376.4" y="189.4" width="5.2" height="8.2" fill="#0a0a30"/>
<rect x="1377" y="190" width="4.2" height="7" fill="#ffff00"/>
<rect x="1376.4" y="198.4" width="5.2" height="4" fill="#0a0a30"/>
<rect x="1377" y="199" width="4.2" height="3" fill="#ffff00"/>
<rect x="157" y="315" width="809" height="1" fill="#3e3e3e"/>
<rect x="157" y="316" width="809" height="10" fill="#1f1f1f"/>
<rect x="157" y="326" width="809" height="1" fill="#3e3e3e"/>
<rect x="153.5" y="312.5" width="3" height="17" rx="0" fill="#1f1f1f" stroke="#3e3e3e" stroke-width="1"/>
<path d="M966.5,329.5 L966.5,312.5 A17,17 0 0 1 983.5,329.5 Z" fill="#1f1f1f" stroke="#3e3e3e" stroke-width="1"/>
<rect x="219.5" y="327.5" width="17" height="2" rx="0" fill="#1f1f1f" stroke="#3e3e3e" stroke-width="1"/>
<rect x="222" y="330" width="1" height="16" fill="#3e3e3e"/>
<rect x="223" y="330" width="10" height="16" fill="#1f1f1f"/>
<rect x="233" y="330" width="1" height="16" fill="#3e3e3e"/>
<rect x="222" y="419" width="1" height="16" fill="#3e3e3e"/>
<rect x="223" y="419" width="10" height="16" fill="#1f1f1f"/>
<rect x="233" y="419" width="1" height="16" fill="#3e3e3e"/>
<rect x="219.5" y="435.5" width="17" height="2" rx="0" fill="#1f1f1f" stroke="#3e3e3e" stroke-width="1"/>
<rect x="250.5" y="327.5" width="17" height="2" rx="0" fill="#1f1f1f" stroke="#3e3e3e" stroke-width="1"/>
<rect x="253" y="330" width="1" height="16" fill="#3e3e3e"/>
<rect x="254" y="330" width="10" height="16" fill="#1f1f1f"/>
<rect x="264" y="330" width="1" height="16" fill="#3e3e3e"/>
<rect x="253" y="419" width="1" height="16" fill="#3e3e3e"/>
<rect x="254" y="419" width="10" height="16" fill="#1f1f1f"/>
<rect x="264" y="419" width="1" height="16" fill="#3e3e3e"/>
<rect x="250.5" y="435.5" width="17" height="2" rx="0" fill="#1f1f1f" stroke="#3e3e3e" stroke-width="1"/>
<rect x="281.5" y="327.5" width="17" height="2" rx="0" fill="#1f1f1f" stroke="#3e3e3e" stroke-width="1"/>
<rect x="284" y="330" width="1" height="16" fill="#3e3e3e"/>
<rect x="285" y="330" width="10" height="16" fill="#1f1f1f"/>
<rect x="295" y="330" width="1" height="16" fill="#3e3e3e"/>
<rect x="284" y="419" width="1" height="16" fill="#3e3e3e"/>
<rect x="285" y="419" width="10" height="16" fill="#1f1f1f"/>
<rect x="295" y="419" width="1" height="16" fill="#3e3e3e"/>
<rect x="281.5" y="435.5" width="17" height="2" rx="0" fill="#1f1f1f" stroke="#3e3e3e" stroke-width="1"/>
<rect x="312.5" y="327.5" width="17" height="2" rx="0" fill="#1f1f1f" stroke="#3e3e3e" stroke-width="1"/>
<rect x="315" y="330" width="1" height="16" fill="#3e3e3e"/>
<rect x="316" y="330" width="10" height="16" fill="#1f1f1f"/>
<rect x="326" y="330" width="1" height="16" fill="#3e3e3e"/>
<rect x="315" y="419" width="1" height="16" fill="#3e3e3e"/>
<rect x="316" y="419" width="10" height="16" fill="#1f1f1f"/>
<rect x="326" y="419" width="1" height="16" fill="#3e3e3e"/>
<rect x="312.5" y="435.5" width="17" height="2" rx="0" fill="#1f1f1f" stroke="#3e3e3e" stroke-width="1"/>
<rect x="343.5" y="327.5" width="17" height="2" rx="0" fill="#1f1f1f" stroke="#3e3e3e" stroke-width="1"/>
<rect x="346" y="330" width="1" height="16" fill="#3e3e3e"/>
<rect x="347" y="330" width="10" height="16" fill="#1f1f1f"/>
<rect x="357" y="330" width="1" height="16" fill="#3e3e3e"/>
<rect x="346" y="419" width="1" height="16" fill="#3e3e3e"/>
<rect x="347" y="419" width="10" height="16" fill="#1f1f1f"/>
<rect x="357" y="419" width="1" height="16" fill="#3e3e3e"/>
<rect x="343.5" y="435.5" width="17" height="2" rx="0" fill="#1f1f1f" stroke="#3e3e3e" stroke-width="1"/>
<rect x="374.5" y="327.5" width="17" height="2" rx="0" fill="#1f1f1f" stroke="#3e3e3e" stroke-width="1"/>
<rect x="377" y="330" width="1" height="16" fill="#3e3e3e"/>
<rect x="378" y="330" width="10" height="16" fill="#1f1f1f"/>
<rect x="388" y="330" width="1" height="16" fill="#3e3e3e"/>
<rect x="377" y="419" width="1" height="16" fill="#3e3e3e"/>
<rect x="378" y="419" width="10" height="16" fill="#1f1f1f"/>
<rect x="388" y="419" width="1" height="16" fill="#3e3e3e"/>
<rect x="374.5" y="435.5" width="17" height="2" rx="0" fill="#1f1f1f" stroke="#3e3e3e" stroke-width="1"/>
<rect x="405.5" y="327.5" width="17" height="2" rx="0" fill="#1f1f1f" stroke="#3e3e3e" stroke-width="1"/>
<rect x="408" y="330" width="1" height="16" fill="#3e3e3e"/>
<rect x="409" y="330" width="10" height="16" fill="#1f1f1f"/>
<rect x="419" y="330" width="1" height="16" fill="#3e3e3e"/>
<rect x="408" y="419" width="1" height="16" fill="#3e3e3e"/>
<rect x="409" y="419" width="10" height="16" fill="#1f1f1f"/>
<rect x="419" y="419" width="1" height="16" fill="#3e3e3e"/>
<rect x="405.5" y="435.5" width="17" height="2" rx="0" fill="#1f1f1f" stroke="#3e3e3e" stroke-width="1"/>
<rect x="436.5" y="327.5" width="17" height="2" rx="0" fill="#1f1f1f" stroke="#3e3e3e" stroke-width="1"/>
<rect x="439" y="330" width="1" height="16" fill="#3e3e3e"/>
<rect x="440" y="330" width="10" height="16" fill="#1f1f1f"/>
<rect x="450" y="330" width="1" height="16" fill="#3e3e3e"/>
<rect x="439" y="419" width="1" height="16" fill="#3e3e3e"/>
<rect x="440" y="419" width="10" height="16" fill="#1f1f1f"/>
<rect x="450" y="419" width="1" height="16" fill="#3e3e3e"/>
<rect x="436.5" y="435.5" width="17" height="2" rx="0" fill="#1f1f1f" stroke="#3e3e3e" stroke-width="1"/>
<rect x="467.5" y="327.5" width="17" height="2" rx="0" fill="#1f1f1f" stroke="#3e3e3e" stroke-width="1"/>
<rect x="470" y="330" width="1" height="16" fill="#3e3e3e"/>
<rect x="471" y="330" width="10" height="16" fill="#1f1f1f"/>
<rect x="481" y="330" width="1" height="16" fill="#3e3e3e"/>
<rect x="470" y="419" width="1" height="16" fill="#3e3e3e"/>
<rect x="471" y="419" width="10" height="16" fill="#1f1f1f"/>
<rect x="481" y="419" width="1" height="16" fill="#3e3e3e"/>
<rect x="467.5" y="435.5" width="17" height="2" rx="0" fill="#1f1f1f" stroke="#3e3e3e" stroke-width="1"/>
<rect x="498.5" y="327.5" width="17" height="2" rx="0" fill="#1f1f1f" stroke="#3e3e3e" stroke-width="1"/>
<rect x="501" y="330" width="1" height="16" fill="#3e3e3e"/>
<rect x="502" y="330" width="10" height="16" fill="#1f1f1f"/>
<rect x="512" y="330" width="1" height="16" fill="#3e3e3e"/>
<rect x="501" y="419" width="1" height="16" fill="#3e3e3e"/>
<rect x="502" y="419" width="10" height="16" fill="#1f1f1f"/>
<rect x="512" y="419" width="1" height="16" fill="#3e3e3e"/>
<rect x="498.5" y="435.5" width="17" height="2" rx="0" fill="#1f1f1f" stroke="#3e3e3e" stroke-width="1"/>
<rect x="529.5" y="327.5" width="17" height="2" rx="0" fill="#1f1f1f" stroke="#3e3e3e" stroke-width="1"/>
<rect x="532" y="330" width="1" height="16" fill="#3e3e3e"/>
<rect x="533" y="330" width="10" height="16" fill="#1f1f1f"/>
<rect x="543" y="330" width="1" height="16" fill="#3e3e3e"/>
<rect x="532" y="419" width="1" height="16" fill="#3e3e3e"/>
<rect x="533" y="419" width="10" height="16" fill="#1f1f1f"/>
<rect x="543" y="419" width="1" height="16" fill="#3e3e3e"/>
<rect x="529.5" y="435.5" width="17" height="2" rx="0" fill="#1f1f1f" stroke="#3e3e3e" stroke-width="1"/>
<rect x="560.5" y="327.5" width="17" height="2" rx="0" fill="#1f1f1f" stroke="#3e3e3e" stroke-width="1"/>
<rect x="563" y="330" width="1" height="16" fill="#3e3e3e"/>
<rect x="564" y="330" width="10" height="16" fill="#1f1f1f"/>
<rect x="574" y="330" width="1" height="16" fill="#3e3e3e"/>
<rect x="563" y="419" width="1" height="16" fill="#3e3e3e"/>
<rect x="564" y="419" width="10" height="16" fill="#1f1f1f"/>
<rect x="574" y="419" width="1" height="16" fill="#3e3e3e"/>
<rect x="560.5" y="435.5" width="17" height="2" rx="0" fill="#1f1f1f" stroke="#3e3e3e" stroke-width="1"/>
<rect x="591.5" y="327.5" width="17" height="2" rx="0" fill="#1f1f1f" stroke="#3e3e3e" stroke-width="1"/>
<rect x="594" y="330" width="1" height="16" fill="#3e3e3e"/>
<rect x="595" y="330" width="10" height="16" fill="#1f1f1f"/>
<rect x="605" y="330" width="1" height="16" fill="#3e3e3e"/>
<rect x="594" y="419" width="1" height="16" fill="#3e3e3e"/>
<rect x="595" y="419" width="10" height="16" fill="#1f1f1f"/>
<rect x="605" y="419" width="1" height="16" fill="#3e3e3e"/>
<rect x="591.5" y="435.5" width="17" height="2" rx="0" fill="#1f1f1f" stroke="#3e3e3e" stroke-width="1"/>
<rect x="622.5" y="327.5" width="17" height="2" rx="0" fill="#1f1f1f" stroke="#3e3e3e" stroke-width="1"/>
<rect x="625" y="330" width="1" height="16" fill="#3e3e3e"/>
<rect x="626" y="330" width="10" height="16" fill="#1f1f1f"/>
<rect x="636" y="330" width="1" height="16" fill="#3e3e3e"/>
<rect x="625" y="419" width="1" height="16" fill="#3e3e3e"/>
<rect x="626" y="419" width="10" height="16" fill="#1f1f1f"/>
<rect x="636" y="419" width="1" height="16" fill="#3e3e3e"/>
<rect x="622.5" y="435.5" width="17" height="2" rx="0" fill="#1f1f1f" stroke="#3e3e3e" stroke-width="1"/>
<rect x="653.5" y="327.5" width="17" height="2" rx="0" fill="#1f1f1f" stroke="#3e3e3e" stroke-width="1"/>
<rect x="656" y="330" width="1" height="16" fill="#3e3e3e"/>
<rect x="657" y="330" width="10" height="16" fill="#1f1f1f"/>
<rect x="667" y="330" width="1" height="16" fill="#3e3e3e"/>
<rect x="656" y="419" width="1" height="16" fill="#3e3e3e"/>
<rect x="657" y="419" width="10" height="16" fill="#1f1f1f"/>
<rect x="667" y="419" width="1" height="16" fill="#3e3e3e"/>
<rect x="653.5" y="435.5" width="17" height="2" rx="0" fill="#1f1f1f" stroke="#3e3e3e" stroke-width="1"/>
<rect x="684.5" y="327.5" width="17" height="2" rx="0" fill="#1f1f1f" stroke="#3e3e3e" stroke-width="1"/>
<rect x="687" y="330" width="1" height="16" fill="#3e3e3e"/>
<rect x="688" y="330" width="10" height="16" fill="#1f1f1f"/>
<rect x="698" y="330" width="1" height="16" fill="#3e3e3e"/>
<rect x="687" y="419" width="1" height="16" fill="#3e3e3e"/>
<rect x="688" y="419" width="10" height="16" fill="#1f1f1f"/>
<rect x="698" y="419" width="1" height="16" fill="#3e3e3e"/>
<rect x="684.5" y="435.5" width="17" height="2" rx="0" fill="#1f1f1f" stroke="#3e3e3e" stroke-width="1"/>
<rect x="715.5" y="327.5" width="17" height="2" rx="0" fill="#1f1f1f" stroke="#3e3e3e" stroke-width="1"/>
<rect x="718" y="330" width="1" height="16" fill="#3e3e3e"/>
<rect x="719" y="330" width="10" height="16" fill="#1f1f1f"/>
<rect x="729" y="330" width="1" height="16" fill="#3e3e3e"/>
<rect x="718" y="419" width="1" height="16" fill="#3e3e3e"/>
<rect x="719" y="419" width="10" height="16" fill="#1f1f1f"/>
<rect x="729" y="419" width="1" height="16" fill="#3e3e3e"/>
<rect x="715.5" y="435.5" width="17" height="2" rx="0" fill="#1f1f1f" stroke="#3e3e3e" stroke-width="1"/>
<rect x="746.5" y="327.5" width="17" height="2" rx="0" fill="#1f1f1f" stroke="#3e3e3e" stroke-width="1"/>
<rect x="749" y="330" width="1" height="16" fill="#3e3e3e"/>
<rect x="750" y="330" width="10" height="16" fill="#1f1f1f"/>
<rect x="760" y="330" width="1" height="16" fill="#3e3e3e"/>
<rect x="749" y="419" width="1" height="16" fill="#3e3e3e"/>
<rect x="750" y="419" width="10" height="16" fill="#1f1f1f"/>
<rect x="760" y="419" width="1" height="16" fill="#3e3e3e"/>
<rect x="746.5" y="435.5" width="17" height="2" rx="0" fill="#1f1f1f" stroke="#3e3e3e" stroke-width="1"/>
<rect x="777.5" y="327.5" width="17" height="2" rx="0" fill="#1f1f1f" stroke="#3e3e3e" stroke-width="1"/>
<rect x="780" y="330" width="1" height="16" fill="#3e3e3e"/>
<rect x="781" y="330" width="10" height="16" fill="#1f1f1f"/>
<rect x="791" y="330" width="1" height="16" fill="#3e3e3e"/>
<rect x="780" y="419" width="1" height="16" fill="#3e3e3e"/>
<rect x="781" y="419" width="10" height="16" fill="#1f1f1f"/>
<rect x="791" y="419" width="1" height="16" fill="#3e3e3e"/>
<rect x="777.5" y="435.5" width="17" height="2" rx="0" fill="#1f1f1f" stroke="#3e3e3e" stroke-width="1"/>
<rect x="808.5" y="327.5" width="17" height="2" rx="0" fill="#1f1f1f" stroke="#3e3e3e" stroke-width="1"/>
<rect x="811" y="330" width="1" height="16" fill="#3e3e3e"/>
<rect x="812" y="330" width="10" height="16" fill="#1f1f1f"/>
<rect x="822" y="330" width="1" height="16" fill="#3e3e3e"/>
<rect x="811" y="419" width="1" height="16" fill="#3e3e3e"/>
<rect x="812" y="419" width="10" height="16" fill="#1f1f1f"/>
<rect x="822" y="419" width="1" height="16" fill="#3e3e3e"/>
<rect x="808.5" y="435.5" width="17" height="2" rx="0" fill="#1f1f1f" stroke="#3e3e3e" stroke-width="1"/>
<rect x="839.5" y="327.5" width="17" height="2" rx="0" fill="#1f1f1f" stroke="#3e3e3e" stroke-width="1"/>
<rect x="842" y="330" width="1" height="16" fill="#3e3e3e"/>
<rect x="843" y="330" width="10" height="16" fill="#1f1f1f"/>
<rect x="853" y="330" width="1" height="16" fill="#3e3e3e"/>
<rect x="842" y="419" width="1" height="16" fill="#3e3e3e"/>
<rect x="843" y="419" width="10" height="16" fill="#1f1f1f"/>
<rect x="853" y="419" width="1" height="16" fill="#3e3e3e"/>
<rect x="839.5" y="435.5" width="17" height="2" rx="0" fill="#1f1f1f" stroke="#3e3e3e" stroke-width="1"/>
<rect x="870.5" y="327.5" width="17" height="2" rx="0" fill="#1f1f1f" stroke="#3e3e3e" stroke-width="1"/>
<rect x="873" y="330" width="1" height="16" fill="#3e3e3e"/>
<rect x="874" y="330" width="10" height="16" fill="#1f1f1f"/>
<rect x="884" y="330" width="1" height="16" fill="#3e3e3e"/>
<rect x="873" y="419" width="1" height="16" fill="#3e3e3e"/>
<rect x="874" y="419" width="10" height="16" fill="#1f1f1f"/>
<rect x="884" y="419" width="1" height="16" fill="#3e3e3e"/>
<rect x="870.5" y="435.5" width="17" height="2" rx="0" fill="#1f1f1f" stroke="#3e3e3e" stroke-width="1"/>
<rect x="901.5" y="327.5" width="17" height="2" rx="0" fill="#1f1f1f" stroke="#3e3e3e" stroke-width="1"/>
<rect x="904" y="330" width="1" height="16" fill="#3e3e3e"/>
<rect x="905" y="330" width="10" height="16" fill="#1f1f1f"/>
<rect x="915" y="330" width="1" height="16" fill="#3e3e3e"/>
<rect x="904" y="419" width="1" height="16" fill="#3e3e3e"/>
<rect x="905" y="419" width="10" height="16" fill="#1f1f1f"/>
<rect x="915" y="419" width="1" height="16" fill="#3e3e3e"/>
<rect x="901.5" y="435.5" width="17" height="2" rx="0" fill="#1f1f1f" stroke="#3e3e3e" stroke-width="1"/>
<rect x="932.5" y="327.5" width="17" height="2" rx="0" fill="#1f1f1f" stroke="#3e3e3e" stroke-width="1"/>
<rect x="935" y="330" width="1" height="16" fill="#3e3e3e"/>
<rect x="936" y="330" width="10" height="16" fill="#1f1f1f"/>
<rect x="946" y="330" width="1" height="16" fill="#3e3e3e"/>
<rect x="935" y="419" width="1" height="16" fill="#3e3e3e"/>
<rect x="936" y="419" width="10" height="16" fill="#1f1f1f"/>
<rect x="946" y="419" width="1" height="16" fill="#3e3e3e"/>
<rect x="932.5" y="435.5" width="17" height="2" rx="0" fill="#1f1f1f" stroke="#3e3e3e" stroke-width="1"/>
<rect x="970" y="330" width="1" height="16" fill="#3e3e3e"/>
<rect x="971" y="330" width="10" height="16" fill="#1f1f1f"/>
<rect x="981" y="330" width="1" height="16" fill="#3e3e3e"/>
<rect x="970" y="419" width="1" height="16" fill="#3e3e3e"/>
<rect x="971" y="419" width="10" height="16" fill="#1f1f1f"/>
<rect x="981" y="419" width="1" height="16" fill="#3e3e3e"/>
<rect x="157" y="438" width="809" height="1" fill="#3e3e3e"/>
<rect x="157" y="439" width="809" height="10" fill="#1f1f1f"/>
<rect x="157" y="449" width="809" height="1" fill="#3e3e3e"/>
<rect x="153.5" y="435.5" width="3" height="17" rx="0" fill="#1f1f1f" stroke="#3e3e3e" stroke-width="1"/>
<path d="M966.5,435.5 L983.5,435.5 A17,17 0 0 1 966.5,452.5 Z" fill="#1f1f1f" stroke="#3e3e3e" stroke-width="1"/>
<rect x="159.5" y="345.5" width="49" height="74" rx="6" fill="#323232" stroke="#444444" stroke-width="1"/>
<text x="0" y="0" transform="translate(180,382.5) rotate(90)" text-anchor="middle" font-size="11" fill="#9a9a9a">L:</text>
<rect x="214.5" y="345.5" width="28" height="74" rx="6.5" fill="#262626"/>
<rect x="215" y="346" width="27" height="73" rx="6" fill="#cd853f"/>
<rect x="215" y="346" width="27" height="73" rx="6" fill="url(#hatch)"/>
<rect x="245.5" y="345.5" width="28" height="74" rx="6.5" fill="#262626"/>
<rect x="246" y="346" width="27" height="73" rx="6" fill="#add8e6"/>
<rect x="246" y="346" width="27" height="73" rx="6" fill="url(#hatch)"/>
<rect x="276.5" y="345.5" width="28" height="74" rx="6.5" fill="#262626"/>
<rect x="277" y="346" width="27" height="73" rx="6" fill="#ffedd6"/>
<rect x="277" y="346" width="27" height="73" rx="6" fill="url(#hatch)"/>
<rect x="307.5" y="345.5" width="28" height="74" rx="6.5" fill="#262626"/>
<rect x="308" y="346" width="27" height="73" rx="6" fill="#bdb76b"/>
<rect x="308" y="346" width="27" height="73" rx="6" fill="url(#hatch)"/>
<rect x="338.5" y="345.5" width="28" height="74" rx="6.5" fill="#262626"/>
<rect x="339" y="346" width="27" height="73" rx="6" fill="#5c4008"/>
<rect x="339" y="346" width="27" height="73" rx="6" fill="url(#hatch)"/>
<rect x="369.5" y="345.5" width="28" height="74" rx="6.5" fill="#262626"/>
<rect x="370" y="346" width="27" height="73" rx="6" fill="#ff6347"/>
<rect x="370" y="346" width="27" height="73" rx="6" fill="url(#hatch)"/>
<rect x="400.5" y="345.5" width="28" height="74" rx="6.5" fill="#262626"/>
<rect x="401" y="346" width="27" height="73" rx="6" fill="#6495ed"/>
<rect x="401" y="346" width="27" height="73" rx="6" fill="url(#hatch)"/>
<rect x="431.5" y="345.5" width="28" height="74" rx="6.5" fill="#262626"/>
<rect x="432" y="346" width="27" height="73" rx="6" fill="#440044"/>
<rect x="432" y="346" width="27" height="73" rx="6" fill="url(#hatch)"/>
<rect x="462.5" y="345.5" width="28" height="74" rx="6.5" fill="#262626"/>
<rect x="463" y="346" width="27" height="73" rx="6" fill="#9b3a1d"/>
<rect x="463" y="346" width="27" height="73" rx="6" fill="url(#hatch)"/>
<rect x="493.5" y="345.5" width="28" height="74" rx="6.5" fill="#262626"/>
<rect x="494" y="346" width="27" height="73" rx="6" fill="#2f4f4f"/>
<rect x="494" y="346" width="27" height="73" rx="6" fill="url(#hatch)"/>
<rect x="524.5" y="345.5" width="28" height="74" rx="6.5" fill="#262626"/>
<rect x="525" y="346" width="27" height="73" rx="6" fill="#8b008b"/>
<rect x="525" y="346" width="27" height="73" rx="6" fill="url(#hatch)"/>
<rect x="555.5" y="345.5" width="28" height="74" rx="6.5" fill="#262626"/>
<rect x="556" y="346" width="27" height="73" rx="6" fill="#ffdab9"/>
<rect x="556" y="346" width="27" height="73" rx="6" fill="url(#hatch)"/>
<rect x="586.5" y="345.5" width="28" height="74" rx="6.5" fill="#262626"/>
<rect x="587" y="346" width="27" height="73" rx="6" fill="#c71585"/>
<rect x="587" y="346" width="27" height="73" rx="6" fill="url(#hatch)"/>
<rect x="617.5" y="345.5" width="28" height="74" rx="6.5" fill="#262626"/>
<rect x="618" y="346" width="27" height="73" rx="6" fill="#4682b4"/>
<rect x="618" y="346" width="27" height="73" rx="6" fill="url(#hatch)"/>
<rect x="648.5" y="345.5" width="28" height="74" rx="6.5" fill="#262626"/>
<rect x="649" y="346" width="27" height="73" rx="6" fill="#6a5acd"/>
<rect x="649" y="346" width="27" height="73" rx="6" fill="url(#hatch)"/>
<rect x="679.5" y="345.5" width="28" height="74" rx="6.5" fill="#262626"/>
<rect x="680" y="346" width="27" height="73" rx="6" fill="#b22222"/>
<rect x="680" y="346" width="27" height="73" rx="6" fill="url(#hatch)"/>
<rect x="710.5" y="345.5" width="28" height="74" rx="6.5" fill="#262626"/>
<rect x="711" y="346" width="27" height="73" rx="6" fill="#8b5a2b"/>
<rect x="711" y="346" width="27" height="73" rx="6" fill="url(#hatch)"/>
<rect x="741.5" y="345.5" width="28" height="74" rx="6.5" fill="#262626"/>
<rect x="742" y="346" width="27" height="73" rx="6" fill="#a52a00"/>
<rect x="742" y="346" width="27" height="73" rx="6" fill="url(#hatch)"/>
<rect x="772.5" y="345.5" width="28" height="74" rx="6.5" fill="#262626"/>
<rect x="773" y="346" width="27" height="73" rx="6" fill="#ffa500"/>
<rect x="773" y="346" width="27" height="73" rx="6" fill="url(#hatch)"/>
<rect x="803.5" y="345.5" width="28" height="74" rx="6.5" fill="#262626"/>
<rect x="804" y="346" width="27" height="73" rx="6" fill="#8b4513"/>
<rect x="804" y="346" width="27" height="73" rx="6" fill="url(#hatch)"/>
<rect x="834.5" y="345.5" width="28" height="74" rx="6.5" fill="#262626"/>
<rect x="835" y="346" width="27" height="73" rx="6" fill="#556b2f"/>
<rect x="835" y="346" width="27" height="73" rx="6" fill="url(#hatch)"/>
<rect x="865.5" y="345.5" width="28" height="74" rx="6.5" fill="#262626"/>
<rect x="866" y="346" width="27" height="73" rx="6" fill="#404000"/>
<rect x="866" y="346" width="27" height="73" rx="6" fill="url(#hatch)"/>
<rect x="896.5" y="345.5" width="28" height="74" rx="6.5" fill="#262626"/>
<rect x="897" y="346" width="27" height="73" rx="6" fill="#008080"/>
<rect x="897" y="346" width="27" height="73" rx="6" fill="url(#hatch)"/>
<rect x="927.5" y="345.5" width="28" height="74" rx="6.5" fill="#262626"/>
<rect x="928" y="346" width="27" height="73" rx="6" fill="#2e8b57"/>
<rect x="928" y="346" width="27" height="73" rx="6" fill="url(#hatch)"/>
<rect x="927.6" y="345.6" width="27.8" height="73.8" rx="6.5" fill="none" stroke="#a8dcd0" stroke-width="1.4"/>
<rect x="962.5" y="345.5" width="28" height="74" rx="6.5" fill="#262626"/>
<rect x="963" y="346" width="27" height="73" rx="6" fill="#b0c4de"/>
<rect x="157" y="458" width="218" height="1" fill="#3e3e3e"/>
<rect x="157" y="459" width="218" height="10" fill="#1f1f1f"/>
<rect x="157" y="469" width="218" height="1" fill="#3e3e3e"/>
<rect x="153.5" y="455.5" width="3" height="17" rx="0" fill="#1f1f1f" stroke="#3e3e3e" stroke-width="1"/>
<path d="M375.5,472.5 L375.5,455.5 A17,17 0 0 1 392.5,472.5 Z" fill="#1f1f1f" stroke="#3e3e3e" stroke-width="1"/>
<rect x="219.5" y="470.5" width="17" height="2" rx="0" fill="#1f1f1f" stroke="#3e3e3e" stroke-width="1"/>
<rect x="222" y="473" width="1" height="16" fill="#3e3e3e"/>
<rect x="223" y="473" width="10" height="16" fill="#1f1f1f"/>
<rect x="233" y="473" width="1" height="16" fill="#3e3e3e"/>
<rect x="250.5" y="470.5" width="17" height="2" rx="0" fill="#1f1f1f" stroke="#3e3e3e" stroke-width="1"/>
<rect x="253" y="473" width="1" height="16" fill="#3e3e3e"/>
<rect x="254" y="473" width="10" height="16" fill="#1f1f1f"/>
<rect x="264" y="473" width="1" height="16" fill="#3e3e3e"/>
<rect x="281.5" y="470.5" width="17" height="2" rx="0" fill="#1f1f1f" stroke="#3e3e3e" stroke-width="1"/>
<rect x="284" y="473" width="1" height="16" fill="#3e3e3e"/>
<rect x="285" y="473" width="10" height="16" fill="#1f1f1f"/>
<rect x="295" y="473" width="1" height="16" fill="#3e3e3e"/>
<rect x="379" y="473" width="1" height="16" fill="#3e3e3e"/>
<rect x="380" y="473" width="10" height="16" fill="#1f1f1f"/>
<rect x="390" y="473" width="1" height="16" fill="#3e3e3e"/>
<rect x="379" y="562" width="1" height="34" fill="#3e3e3e"/>
<rect x="380" y="562" width="10" height="34" fill="#1f1f1f"/>
<rect x="390" y="562" width="1" height="34" fill="#3e3e3e"/>
<rect x="222" y="562" width="1" height="34" fill="#3e3e3e"/>
<rect x="223" y="562" width="10" height="34" fill="#1f1f1f"/>
<rect x="233" y="562" width="1" height="34" fill="#3e3e3e"/>
<rect x="253" y="562" width="1" height="34" fill="#3e3e3e"/>
<rect x="254" y="562" width="10" height="34" fill="#1f1f1f"/>
<rect x="264" y="562" width="1" height="34" fill="#3e3e3e"/>
<rect x="284" y="562" width="1" height="34" fill="#3e3e3e"/>
<rect x="285" y="562" width="10" height="34" fill="#1f1f1f"/>
<rect x="295" y="562" width="1" height="34" fill="#3e3e3e"/>
<rect x="159.5" y="488.5" width="49" height="74" rx="6" fill="#323232" stroke="#444444" stroke-width="1"/>
<text x="0" y="0" transform="translate(180,525.5) rotate(90)" text-anchor="middle" font-size="11" fill="#9a9a9a">E:</text>
<rect x="312.5" y="488.5" width="49" height="74" rx="6" fill="#323232" stroke="#444444" stroke-width="1"/>
<text x="0" y="0" transform="translate(333,525.5) rotate(90)" text-anchor="middle" font-size="11" fill="#9a9a9a">M:</text>
<rect x="214.5" y="488.5" width="28" height="74" rx="6.5" fill="#262626"/>
<rect x="215" y="489" width="27" height="73" rx="6" fill="#db7093"/>
<rect x="245.5" y="488.5" width="28" height="74" rx="6.5" fill="#262626"/>
<rect x="246" y="489" width="27" height="73" rx="6" fill="#db7093"/>
<rect x="246" y="489" width="27" height="73" rx="6" fill="url(#hatch)"/>
<rect x="276.5" y="488.5" width="28" height="74" rx="6.5" fill="#262626"/>
<rect x="277" y="489" width="27" height="73" rx="6" fill="#e9967a"/>
<rect x="277" y="489" width="27" height="73" rx="6" fill="url(#hatch)"/>
<rect x="371.5" y="488.5" width="28" height="74" rx="6.5" fill="#262626"/>
<rect x="372" y="489" width="27" height="73" rx="6" fill="#b0c4de"/>
</g>
<rect x="2536" y="25" width="21" height="546" fill="#ffffff"/>
<rect x="2536" y="25" width="1.5" height="546" fill="#c2c2c2"/>
<rect x="2555.8" y="25" width="1.5" height="546" fill="#c2c2c2"/>
<rect x="2537.5" y="46.5" width="18.3" height="316" fill="#dcdcdc" stroke="#acacac" stroke-width="1"/>
<path d="M2542.2,40.2 L2546.6,35.8 L2551,40.2" fill="none" stroke="#686868" stroke-width="1.8"/>
<path d="M2542.2,558.8 L2546.6,563.2 L2551,558.8" fill="none" stroke="#686868" stroke-width="1.8"/>
<rect x="2537" y="550" width="19" height="1" fill="#c4c4c4"/>
<rect x="2537" y="570" width="19" height="1" fill="#c4c4c4"/>
<rect x="2542.5" y="199.75" width="8" height="1.5" fill="#5a5a5a"/>
<rect x="2542.5" y="202.75" width="8" height="1.5" fill="#5a5a5a"/>
<rect x="2542.5" y="205.75" width="8" height="1.5" fill="#5a5a5a"/>
<rect x="2536" y="25" width="21" height="1" fill="#c8c8c8"/>
</svg>
<div style="position:absolute;left:1109px;top:271px;width:194px;height:61px;background:#f0f0f0;border:1px solid #a8a8a8;border-right-color:#d8dede;border-bottom-color:#c4cccc;box-shadow:inset 1px 1px 0 #fbfbfb"></div>
<div style="position:absolute;left:1149px;top:277px;width:1px;height:51px;background:#a8a8a8"></div>
<svg style="position:absolute;left:1282px;top:309px" width="18" height="24" viewBox="0 0 18 24"><path d="M2.3,3.3 L2.3,20.1 L6.4,15.8 L9.5,22.8 L12.4,22.8 L9.5,14.7 L13.8,14.7 Z" fill="rgba(0,0,0,0.18)"/><path d="M1.3,1.1 L1.3,17.9 L5.4,13.6 L8.5,21 L11.4,21 L8.5,12.5 L12.8,12.5 Z" fill="#fff" stroke="#000" stroke-width="1.1" stroke-linejoin="miter"/></svg>
<div style="position:absolute;left:1113px;top:301px;width:184px;height:26px;border:3px solid #c8102e"></div>
<div class="t" style="left:1157px;top:282px;font-size:15px;letter-spacing:-0.35px;color:#000">QuickTrace</div>
<div class="t" style="left:1157px;top:310px;font-size:15px;letter-spacing:-0.35px;color:#000">QuickReport</div>
<svg style="position:absolute;left:1305px;top:308px" width="66" height="26" viewBox="0 0 66 26"><path d="M4,12.7 L21,3.8 L21,21.8 Z" fill="#c8102e"/><line x1="19" y1="12.7" x2="58" y2="12.7" stroke="#c8102e" stroke-width="6" stroke-linecap="round"/></svg>
<div style="position:absolute;left:3px;top:571px;width:2554px;height:1px;background:#fafafa"></div>
<div style="position:absolute;left:3px;top:585px;width:2554px;height:1px;background:#fafafa"></div>
<svg style="position:absolute;left:1274px;top:572px" width="12" height="12" viewBox="0 0 12 12"><path d="M2,3 L5.6,6.8 L9.2,3" fill="none" stroke="#646464" stroke-width="1.8"/></svg>
<div style="position:absolute;left:3px;top:586px;width:2554px;height:280px;background:#fff;overflow:hidden">
<div style="position:absolute;left:0px;top:0px;width:2554px;height:1px;background:#646464"></div>
<div style="position:absolute;left:0px;top:0px;width:1px;height:280px;background:#646464"></div>
<div style="position:absolute;left:0px;top:279px;width:2554px;height:1px;background:#646464"></div>
<div style="position:absolute;left:25px;top:1px;width:1px;height:279px;background:#a0a0a0"></div>
<div style="position:absolute;left:26px;top:1px;width:23px;height:29px;background:#ff8c00"></div>
<div style="position:absolute;left:49px;top:1px;width:1px;height:29px;background:#a0a0a0"></div>
<div style="position:absolute;left:73px;top:1px;width:1px;height:29px;background:#a0a0a0"></div>
<div style="position:absolute;left:74px;top:1px;width:19px;height:4px;background:#008080"></div>
<div style="position:absolute;left:74px;top:5px;width:1138px;height:1px;background:#d9d9d9"></div>
<div style="position:absolute;left:93px;top:6px;width:1060px;height:23px;background:#e5f1fb"></div>
<div style="position:absolute;left:74px;top:6px;width:19px;height:22px;background:#2e8b57"></div>
<div style="position:absolute;left:93px;top:1px;width:1px;height:28px;background:#d9d9d9"></div>
<div style="position:absolute;left:187px;top:1px;width:1px;height:28px;background:#d9d9d9"></div>
<div style="position:absolute;left:282px;top:1px;width:1px;height:28px;background:#d9d9d9"></div>
<div style="position:absolute;left:375px;top:1px;width:1px;height:28px;background:#d9d9d9"></div>
<div style="position:absolute;left:429px;top:1px;width:1px;height:28px;background:#d9d9d9"></div>
<div style="position:absolute;left:494px;top:1px;width:1px;height:28px;background:#d9d9d9"></div>
<div style="position:absolute;left:584px;top:1px;width:1px;height:28px;background:#d9d9d9"></div>
<div style="position:absolute;left:674px;top:1px;width:1px;height:28px;background:#d9d9d9"></div>
<div style="position:absolute;left:734px;top:1px;width:1px;height:28px;background:#d9d9d9"></div>
<div style="position:absolute;left:812px;top:1px;width:1px;height:28px;background:#d9d9d9"></div>
<div style="position:absolute;left:902px;top:1px;width:1px;height:28px;background:#d9d9d9"></div>
<div style="position:absolute;left:1016px;top:1px;width:1px;height:28px;background:#d9d9d9"></div>
<div style="position:absolute;left:1076px;top:1px;width:1px;height:28px;background:#d9d9d9"></div>
<div style="position:absolute;left:1153px;top:1px;width:1px;height:28px;background:#d9d9d9"></div>
<div style="position:absolute;left:1211px;top:1px;width:1px;height:4px;background:#d9d9d9"></div>
<div style="position:absolute;left:1154px;top:6px;width:57px;height:23px;border:1px dotted #333;box-sizing:border-box"></div>
<div style="position:absolute;left:50px;top:29px;width:2479px;height:2px;background:#a0a0a0"></div>
<div class="t" style="left:97.5px;top:11.700000000000045px;font-size:11px;color:#000;letter-spacing:-0.45px">LONDONSQL01...</div>
<div class="t" style="left:191.5px;top:11.700000000000045px;font-size:11px;color:#000;">Sweetwater</div>
<div class="t" style="left:286.5px;top:11.700000000000045px;font-size:11px;color:#000;">Sweetwater</div>
<div class="t" style="left:379.5px;top:11.700000000000045px;font-size:11px;color:#000;">Data</div>
<div class="t r" style="left:190.5px;width:300px;top:11.700000000000045px;font-size:11px;color:#000;">7</div>
<div class="t r" style="left:280.5px;width:300px;top:11.700000000000045px;font-size:11px;color:#000;">0</div>
<div class="t r" style="left:370.5px;width:300px;top:11.700000000000045px;font-size:11px;color:#000;">0%</div>
<div class="t r" style="left:430.5px;width:300px;top:11.700000000000045px;font-size:11px;color:#000;">0.0</div>
<div class="t r" style="left:508.5px;width:300px;top:11.700000000000045px;font-size:11px;color:#000;">0</div>
<div class="t r" style="left:598.5px;width:300px;top:11.700000000000045px;font-size:11px;color:#000;">0</div>
<div class="t r" style="left:712.5px;width:300px;top:11.700000000000045px;font-size:11px;color:#000;">0%</div>
<div class="t r" style="left:772.5px;width:300px;top:11.700000000000045px;font-size:11px;color:#000;">0.0</div>
<div class="t r" style="left:849.5px;width:300px;top:11.700000000000045px;font-size:11px;color:#000;">0</div>
<div style="position:absolute;left:29px;top:37px;width:9px;height:9px;border:1px solid #404040;box-sizing:border-box;background:#fff"></div>
<div style="position:absolute;left:31px;top:41px;width:5px;height:1px;background:#404040"></div>
<div class="t" style="left:45.5px;top:36.700000000000045px;font-size:11px;color:#1a1a2a;letter-spacing:-0.3px">Disk 2</div>
<div style="position:absolute;left:423px;top:31px;width:1px;height:23px;background:#d9d9d9"></div>
<div style="position:absolute;left:488px;top:31px;width:1px;height:23px;background:#d9d9d9"></div>
<div style="position:absolute;left:578px;top:31px;width:1px;height:23px;background:#d9d9d9"></div>
<div style="position:absolute;left:668px;top:31px;width:1px;height:23px;background:#d9d9d9"></div>
<div style="position:absolute;left:728px;top:31px;width:1px;height:23px;background:#d9d9d9"></div>
<div style="position:absolute;left:818px;top:31px;width:1px;height:23px;background:#d9d9d9"></div>
<div style="position:absolute;left:908px;top:31px;width:1px;height:23px;background:#d9d9d9"></div>
<div style="position:absolute;left:968px;top:31px;width:1px;height:23px;background:#d9d9d9"></div>
<div style="position:absolute;left:1031px;top:31px;width:1px;height:23px;background:#d9d9d9"></div>
<div style="position:absolute;left:1094px;top:31px;width:1px;height:23px;background:#d9d9d9"></div>
<div style="position:absolute;left:1207px;top:31px;width:1px;height:23px;background:#d9d9d9"></div>
<div style="position:absolute;left:1322px;top:31px;width:1px;height:23px;background:#d9d9d9"></div>
<div class="t r" style="left:184.5px;width:300px;top:36.700000000000045px;font-size:11px;color:#000;">49,152</div>
<div class="t r" style="left:274.5px;width:300px;top:36.700000000000045px;font-size:11px;color:#000;">0</div>
<div class="t r" style="left:364.5px;width:300px;top:36.700000000000045px;font-size:11px;color:#000;">0%</div>
<div class="t r" style="left:424.5px;width:300px;top:36.700000000000045px;font-size:11px;color:#000;">0.0</div>
<div class="t r" style="left:514.5px;width:300px;top:36.700000000000045px;font-size:11px;color:#000;">4,506</div>
<div class="t r" style="left:604.5px;width:300px;top:36.700000000000045px;font-size:11px;color:#000;">2%</div>
<div class="t r" style="left:664.5px;width:300px;top:36.700000000000045px;font-size:11px;color:#000;">0.0</div>
<div class="t r" style="left:727.5px;width:300px;top:36.700000000000045px;font-size:11px;color:#000;">0</div>
<div class="t r" style="left:790.5px;width:300px;top:36.700000000000045px;font-size:11px;color:#000;">0</div>
<div class="t r" style="left:903.5px;width:300px;top:36.700000000000045px;font-size:11px;color:#000;">0</div>
<div class="t r" style="left:1018.5px;width:300px;top:36.700000000000045px;font-size:11px;color:#000;">0</div>
<div style="position:absolute;left:49px;top:54px;width:2480px;height:22px;background:#f0f0f0;border-top:1px solid #a0a0a0;border-bottom:1px solid #a0a0a0;border-left:1px solid #a0a0a0;box-sizing:border-box"></div>
<div style="position:absolute;left:372px;top:55px;width:1px;height:20px;background:#a0a0a0"></div>
<div style="position:absolute;left:426px;top:55px;width:1px;height:20px;background:#a0a0a0"></div>
<div style="position:absolute;left:491px;top:55px;width:1px;height:20px;background:#a0a0a0"></div>
<div style="position:absolute;left:642px;top:55px;width:1px;height:20px;background:#a0a0a0"></div>
<div class="t" style="left:54.5px;top:59.299999999999955px;font-size:11px;color:#1a1a2a;letter-spacing:-0.45px">Logical Disk</div>
<div class="t" style="left:376.5px;top:59.299999999999955px;font-size:11px;color:#1a1a2a;">Type</div>
<div class="t c" style="left:424.0px;width:70px;top:59.299999999999955px;font-size:11px;color:#1a1a2a;letter-spacing:-0.4px">Size (MB)</div>
<div class="t" style="left:495.5px;top:59.299999999999955px;font-size:11px;color:#1a1a2a;letter-spacing:-0.18px">Forecasted Exhaustion</div>
<div style="position:absolute;left:49px;top:76px;width:1px;height:204px;background:#a0a0a0"></div>
<div style="position:absolute;left:53px;top:82px;width:9px;height:9px;border:1px solid #404040;box-sizing:border-box;background:#fff"></div>
<div style="position:absolute;left:55px;top:86px;width:5px;height:1px;background:#404040"></div>
<div class="t" style="left:69.5px;top:81.70000000000005px;font-size:11px;color:#1a1a2a;">Log (L:)</div>
<div class="t" style="left:376.5px;top:81.70000000000005px;font-size:11px;color:#1a1a2a;">NTFS</div>
<div class="t r" style="left:187.5px;width:300px;top:81.70000000000005px;font-size:11px;color:#1a1a2a;">49,022</div>
<div class="t" style="left:495.5px;top:81.70000000000005px;font-size:11px;color:#1a1a2a;">None</div>
<div style="position:absolute;left:73px;top:99px;width:2456px;height:41px;background:#f0f0f0;border-top:1px solid #a0a0a0;border-bottom:1px solid #a0a0a0;border-left:1px solid #a0a0a0;box-sizing:border-box"></div>
<div style="position:absolute;left:93px;top:100px;width:1px;height:39px;background:#a0a0a0"></div>
<div style="position:absolute;left:187px;top:100px;width:1px;height:39px;background:#a0a0a0"></div>
<div style="position:absolute;left:282px;top:100px;width:1px;height:39px;background:#a0a0a0"></div>
<div style="position:absolute;left:375px;top:100px;width:1px;height:39px;background:#a0a0a0"></div>
<div style="position:absolute;left:429px;top:100px;width:1px;height:39px;background:#a0a0a0"></div>
<div style="position:absolute;left:494px;top:100px;width:1px;height:39px;background:#a0a0a0"></div>
<div style="position:absolute;left:584px;top:100px;width:1px;height:39px;background:#a0a0a0"></div>
<div style="position:absolute;left:674px;top:100px;width:1px;height:39px;background:#a0a0a0"></div>
<div style="position:absolute;left:734px;top:100px;width:1px;height:39px;background:#a0a0a0"></div>
<div style="position:absolute;left:812px;top:100px;width:1px;height:39px;background:#a0a0a0"></div>
<div style="position:absolute;left:902px;top:100px;width:1px;height:39px;background:#a0a0a0"></div>
<div style="position:absolute;left:1016px;top:100px;width:1px;height:39px;background:#a0a0a0"></div>
<div style="position:absolute;left:1076px;top:100px;width:1px;height:39px;background:#a0a0a0"></div>
<div style="position:absolute;left:1153px;top:100px;width:1px;height:39px;background:#a0a0a0"></div>
<div style="position:absolute;left:1211px;top:100px;width:1px;height:39px;background:#a0a0a0"></div>
<div class="t" style="left:98px;top:114.39999999999998px;font-size:11px;color:#1a1a2a;letter-spacing:-0.35px">SQL Server</div>
<div class="t" style="left:192px;top:114.39999999999998px;font-size:11px;color:#1a1a2a;letter-spacing:-0.1px">Database</div>
<div class="t" style="left:287px;top:114.39999999999998px;font-size:11px;color:#1a1a2a;letter-spacing:-0.1px">File</div>
<div class="t" style="left:380px;top:114.39999999999998px;font-size:11px;color:#1a1a2a;letter-spacing:-0.1px">Type</div>
<div class="t c" style="left:429.5px;width:65px;top:114.39999999999998px;font-size:11px;color:#1a1a2a;letter-spacing:-0.35px">Size (MB)</div>
<div class="t c" style="left:494.5px;width:90px;top:114.39999999999998px;font-size:11px;color:#1a1a2a;letter-spacing:-0.35px">Read Bytes</div>
<div class="t c" style="left:584.5px;width:90px;top:114.39999999999998px;font-size:11px;color:#1a1a2a;letter-spacing:-0.35px">% Read Bytes</div>
<div class="t c" style="left:674.5px;width:60px;top:114.39999999999998px;font-size:11px;color:#1a1a2a;letter-spacing:-0.1px">Reads</div>
<div class="t c" style="left:734.5px;width:78px;top:114.39999999999998px;font-size:11px;color:#1a1a2a;letter-spacing:-0.35px">Bytes/Read</div>
<div class="t c" style="left:812.5px;width:90px;top:114.39999999999998px;font-size:11px;color:#1a1a2a;letter-spacing:-0.35px">Write Bytes</div>
<div class="t c" style="left:902.5px;width:114px;top:114.39999999999998px;font-size:11px;color:#1a1a2a;letter-spacing:-0.35px">% Write Bytes</div>
<div class="t c" style="left:1016.5px;width:60px;top:114.39999999999998px;font-size:11px;color:#1a1a2a;letter-spacing:-0.1px">Writes</div>
<div class="t c" style="left:1076.5px;width:77px;top:114.39999999999998px;font-size:11px;color:#1a1a2a;letter-spacing:-0.35px">Bytes/Write</div>
<div class="t c" style="left:1153.5px;width:58px;top:106.5px;font-size:11px;color:#1a1a2a;">Total</div>
<div class="t c" style="left:1153.5px;width:58px;top:119.5px;font-size:11px;color:#1a1a2a;">VLFs</div>
<svg style="position:absolute;left:171.5px;top:115px" width="10" height="7" viewBox="0 0 10 7"><path d="M1,6 L5,1.5 L9,6 Z" fill="#606060"/></svg>
<svg style="position:absolute;left:266.5px;top:115px" width="10" height="7" viewBox="0 0 10 7"><path d="M1,6 L5,1.5 L9,6 Z" fill="#606060"/></svg>
<svg style="position:absolute;left:359px;top:115px" width="10" height="7" viewBox="0 0 10 7"><path d="M1,6 L5,1.5 L9,6 Z" fill="#606060"/></svg>
<div style="position:absolute;left:74px;top:140px;width:19px;height:22px;background:#cd853f"></div>
<div style="position:absolute;left:93px;top:162px;width:1119px;height:1px;background:#d9d9d9"></div>
<div style="position:absolute;left:93px;top:140px;width:1px;height:23px;background:#d9d9d9"></div>
<div style="position:absolute;left:187px;top:140px;width:1px;height:23px;background:#d9d9d9"></div>
<div style="position:absolute;left:282px;top:140px;width:1px;height:23px;background:#d9d9d9"></div>
<div style="position:absolute;left:375px;top:140px;width:1px;height:23px;background:#d9d9d9"></div>
<div style="position:absolute;left:429px;top:140px;width:1px;height:23px;background:#d9d9d9"></div>
<div style="position:absolute;left:494px;top:140px;width:1px;height:23px;background:#d9d9d9"></div>
<div style="position:absolute;left:584px;top:140px;width:1px;height:23px;background:#d9d9d9"></div>
<div style="position:absolute;left:674px;top:140px;width:1px;height:23px;background:#d9d9d9"></div>
<div style="position:absolute;left:734px;top:140px;width:1px;height:23px;background:#d9d9d9"></div>
<div style="position:absolute;left:812px;top:140px;width:1px;height:23px;background:#d9d9d9"></div>
<div style="position:absolute;left:902px;top:140px;width:1px;height:23px;background:#d9d9d9"></div>
<div style="position:absolute;left:1016px;top:140px;width:1px;height:23px;background:#d9d9d9"></div>
<div style="position:absolute;left:1076px;top:140px;width:1px;height:23px;background:#d9d9d9"></div>
<div style="position:absolute;left:1153px;top:140px;width:1px;height:23px;background:#d9d9d9"></div>
<div style="position:absolute;left:1211px;top:140px;width:1px;height:23px;background:#d9d9d9"></div>
<div class="t" style="left:97.5px;top:145.79999999999995px;font-size:11px;color:#000;letter-spacing:-0.45px">LONDONSQL01...</div>
<div class="t" style="left:191.5px;top:145.79999999999995px;font-size:11px;color:#000;letter-spacing:-0.1px">Accounts_Rec</div>
<div class="t" style="left:286.5px;top:145.79999999999995px;font-size:11px;color:#000;letter-spacing:-0.1px">Accounts_Rec...</div>
<div class="t" style="left:379.5px;top:145.79999999999995px;font-size:11px;color:#000;">Transa...</div>
<div class="t r" style="left:190.5px;width:300px;top:145.79999999999995px;font-size:11px;color:#000;">13</div>
<div class="t r" style="left:280.5px;width:300px;top:145.79999999999995px;font-size:11px;color:#000;">0</div>
<div class="t r" style="left:370.5px;width:300px;top:145.79999999999995px;font-size:11px;color:#000;">0%</div>
<div class="t r" style="left:430.5px;width:300px;top:145.79999999999995px;font-size:11px;color:#000;">0.0</div>
<div class="t r" style="left:508.5px;width:300px;top:145.79999999999995px;font-size:11px;color:#000;">0</div>
<div class="t r" style="left:598.5px;width:300px;top:145.79999999999995px;font-size:11px;color:#000;">0</div>
<div class="t r" style="left:712.5px;width:300px;top:145.79999999999995px;font-size:11px;color:#000;">0%</div>
<div class="t r" style="left:772.5px;width:300px;top:145.79999999999995px;font-size:11px;color:#000;">0.0</div>
<div class="t r" style="left:849.5px;width:300px;top:145.79999999999995px;font-size:11px;color:#000;">0</div>
<div class="t r" style="left:907.5px;width:300px;top:145.79999999999995px;font-size:11px;color:#000;">40</div>
<div style="position:absolute;left:74px;top:163px;width:19px;height:22px;background:#add8e6"></div>
<div style="position:absolute;left:93px;top:185px;width:1119px;height:1px;background:#d9d9d9"></div>
<div style="position:absolute;left:93px;top:163px;width:1px;height:23px;background:#d9d9d9"></div>
<div style="position:absolute;left:187px;top:163px;width:1px;height:23px;background:#d9d9d9"></div>
<div style="position:absolute;left:282px;top:163px;width:1px;height:23px;background:#d9d9d9"></div>
<div style="position:absolute;left:375px;top:163px;width:1px;height:23px;background:#d9d9d9"></div>
<div style="position:absolute;left:429px;top:163px;width:1px;height:23px;background:#d9d9d9"></div>
<div style="position:absolute;left:494px;top:163px;width:1px;height:23px;background:#d9d9d9"></div>
<div style="position:absolute;left:584px;top:163px;width:1px;height:23px;background:#d9d9d9"></div>
<div style="position:absolute;left:674px;top:163px;width:1px;height:23px;background:#d9d9d9"></div>
<div style="position:absolute;left:734px;top:163px;width:1px;height:23px;background:#d9d9d9"></div>
<div style="position:absolute;left:812px;top:163px;width:1px;height:23px;background:#d9d9d9"></div>
<div style="position:absolute;left:902px;top:163px;width:1px;height:23px;background:#d9d9d9"></div>
<div style="position:absolute;left:1016px;top:163px;width:1px;height:23px;background:#d9d9d9"></div>
<div style="position:absolute;left:1076px;top:163px;width:1px;height:23px;background:#d9d9d9"></div>
<div style="position:absolute;left:1153px;top:163px;width:1px;height:23px;background:#d9d9d9"></div>
<div style="position:absolute;left:1211px;top:163px;width:1px;height:23px;background:#d9d9d9"></div>
<div class="t" style="left:97.5px;top:168.79999999999995px;font-size:11px;color:#000;letter-spacing:-0.45px">LONDONSQL01...</div>
<div class="t" style="left:191.5px;top:168.79999999999995px;font-size:11px;color:#000;">Acquisitions</div>
<div class="t" style="left:286.5px;top:168.79999999999995px;font-size:11px;color:#000;">Acquisitions_log</div>
<div class="t" style="left:379.5px;top:168.79999999999995px;font-size:11px;color:#000;">Transa...</div>
<div class="t r" style="left:190.5px;width:300px;top:168.79999999999995px;font-size:11px;color:#000;">6</div>
<div class="t r" style="left:280.5px;width:300px;top:168.79999999999995px;font-size:11px;color:#000;">0</div>
<div class="t r" style="left:370.5px;width:300px;top:168.79999999999995px;font-size:11px;color:#000;">0%</div>
<div class="t r" style="left:430.5px;width:300px;top:168.79999999999995px;font-size:11px;color:#000;">0.0</div>
<div class="t r" style="left:508.5px;width:300px;top:168.79999999999995px;font-size:11px;color:#000;">0</div>
<div class="t r" style="left:598.5px;width:300px;top:168.79999999999995px;font-size:11px;color:#000;">0</div>
<div class="t r" style="left:712.5px;width:300px;top:168.79999999999995px;font-size:11px;color:#000;">0%</div>
<div class="t r" style="left:772.5px;width:300px;top:168.79999999999995px;font-size:11px;color:#000;">0.0</div>
<div class="t r" style="left:849.5px;width:300px;top:168.79999999999995px;font-size:11px;color:#000;">0</div>
<div class="t r" style="left:907.5px;width:300px;top:168.79999999999995px;font-size:11px;color:#000;">0</div>
<div style="position:absolute;left:74px;top:186px;width:19px;height:22px;background:#ffebcd"></div>
<div style="position:absolute;left:1154px;top:186px;width:57px;height:22px;background:#f08080"></div>
<div style="position:absolute;left:93px;top:208px;width:1119px;height:1px;background:#d9d9d9"></div>
<div style="position:absolute;left:93px;top:186px;width:1px;height:23px;background:#d9d9d9"></div>
<div style="position:absolute;left:187px;top:186px;width:1px;height:23px;background:#d9d9d9"></div>
<div style="position:absolute;left:282px;top:186px;width:1px;height:23px;background:#d9d9d9"></div>
<div style="position:absolute;left:375px;top:186px;width:1px;height:23px;background:#d9d9d9"></div>
<div style="position:absolute;left:429px;top:186px;width:1px;height:23px;background:#d9d9d9"></div>
<div style="position:absolute;left:494px;top:186px;width:1px;height:23px;background:#d9d9d9"></div>
<div style="position:absolute;left:584px;top:186px;width:1px;height:23px;background:#d9d9d9"></div>
<div style="position:absolute;left:674px;top:186px;width:1px;height:23px;background:#d9d9d9"></div>
<div style="position:absolute;left:734px;top:186px;width:1px;height:23px;background:#d9d9d9"></div>
<div style="position:absolute;left:812px;top:186px;width:1px;height:23px;background:#d9d9d9"></div>
<div style="position:absolute;left:902px;top:186px;width:1px;height:23px;background:#d9d9d9"></div>
<div style="position:absolute;left:1016px;top:186px;width:1px;height:23px;background:#d9d9d9"></div>
<div style="position:absolute;left:1076px;top:186px;width:1px;height:23px;background:#d9d9d9"></div>
<div style="position:absolute;left:1153px;top:186px;width:1px;height:23px;background:#d9d9d9"></div>
<div style="position:absolute;left:1211px;top:186px;width:1px;height:23px;background:#d9d9d9"></div>
<div class="t" style="left:97.5px;top:191.79999999999995px;font-size:11px;color:#000;letter-spacing:-0.45px">LONDONSQL01...</div>
<div class="t" style="left:191.5px;top:191.79999999999995px;font-size:11px;color:#000;letter-spacing:-0.22px">AdventureWor...</div>
<div class="t" style="left:286.5px;top:191.79999999999995px;font-size:11px;color:#000;letter-spacing:-0.22px">AdventureWor...</div>
<div class="t" style="left:379.5px;top:191.79999999999995px;font-size:11px;color:#000;">Transa...</div>
<div class="t r" style="left:190.5px;width:300px;top:191.79999999999995px;font-size:11px;color:#000;">3,778</div>
<div class="t r" style="left:280.5px;width:300px;top:191.79999999999995px;font-size:11px;color:#000;">0</div>
<div class="t r" style="left:370.5px;width:300px;top:191.79999999999995px;font-size:11px;color:#000;">0%</div>
<div class="t r" style="left:430.5px;width:300px;top:191.79999999999995px;font-size:11px;color:#000;">0.0</div>
<div class="t r" style="left:508.5px;width:300px;top:191.79999999999995px;font-size:11px;color:#000;">0</div>
<div class="t r" style="left:598.5px;width:300px;top:191.79999999999995px;font-size:11px;color:#000;">4,506</div>
<div class="t r" style="left:712.5px;width:300px;top:191.79999999999995px;font-size:11px;color:#000;">2%</div>
<div class="t r" style="left:772.5px;width:300px;top:191.79999999999995px;font-size:11px;color:#000;">0.0</div>
<div class="t r" style="left:849.5px;width:300px;top:191.79999999999995px;font-size:11px;color:#000;">0</div>
<div class="t r" style="left:907.5px;width:300px;top:191.79999999999995px;font-size:11px;color:#000;">3,801</div>
<div style="position:absolute;left:74px;top:209px;width:19px;height:22px;background:#bdb76b"></div>
<div style="position:absolute;left:1154px;top:209px;width:57px;height:22px;background:#f08080"></div>
<div style="position:absolute;left:93px;top:231px;width:1119px;height:1px;background:#d9d9d9"></div>
<div style="position:absolute;left:93px;top:209px;width:1px;height:23px;background:#d9d9d9"></div>
<div style="position:absolute;left:187px;top:209px;width:1px;height:23px;background:#d9d9d9"></div>
<div style="position:absolute;left:282px;top:209px;width:1px;height:23px;background:#d9d9d9"></div>
<div style="position:absolute;left:375px;top:209px;width:1px;height:23px;background:#d9d9d9"></div>
<div style="position:absolute;left:429px;top:209px;width:1px;height:23px;background:#d9d9d9"></div>
<div style="position:absolute;left:494px;top:209px;width:1px;height:23px;background:#d9d9d9"></div>
<div style="position:absolute;left:584px;top:209px;width:1px;height:23px;background:#d9d9d9"></div>
<div style="position:absolute;left:674px;top:209px;width:1px;height:23px;background:#d9d9d9"></div>
<div style="position:absolute;left:734px;top:209px;width:1px;height:23px;background:#d9d9d9"></div>
<div style="position:absolute;left:812px;top:209px;width:1px;height:23px;background:#d9d9d9"></div>
<div style="position:absolute;left:902px;top:209px;width:1px;height:23px;background:#d9d9d9"></div>
<div style="position:absolute;left:1016px;top:209px;width:1px;height:23px;background:#d9d9d9"></div>
<div style="position:absolute;left:1076px;top:209px;width:1px;height:23px;background:#d9d9d9"></div>
<div style="position:absolute;left:1153px;top:209px;width:1px;height:23px;background:#d9d9d9"></div>
<div style="position:absolute;left:1211px;top:209px;width:1px;height:23px;background:#d9d9d9"></div>
<div class="t" style="left:97.5px;top:214.79999999999995px;font-size:11px;color:#000;letter-spacing:-0.45px">LONDONSQL01...</div>
<div class="t" style="left:191.5px;top:214.79999999999995px;font-size:11px;color:#000;letter-spacing:-0.22px">AdventureWor...</div>
<div class="t" style="left:286.5px;top:214.79999999999995px;font-size:11px;color:#000;letter-spacing:-0.22px">AdventureWor...</div>
<div class="t" style="left:379.5px;top:214.79999999999995px;font-size:11px;color:#000;">Transa...</div>
<div class="t r" style="left:190.5px;width:300px;top:214.79999999999995px;font-size:11px;color:#000;">5,126</div>
<div class="t r" style="left:280.5px;width:300px;top:214.79999999999995px;font-size:11px;color:#000;">0</div>
<div class="t r" style="left:370.5px;width:300px;top:214.79999999999995px;font-size:11px;color:#000;">0%</div>
<div class="t r" style="left:430.5px;width:300px;top:214.79999999999995px;font-size:11px;color:#000;">0.0</div>
<div class="t r" style="left:508.5px;width:300px;top:214.79999999999995px;font-size:11px;color:#000;">0</div>
<div class="t r" style="left:598.5px;width:300px;top:214.79999999999995px;font-size:11px;color:#000;">0</div>
<div class="t r" style="left:712.5px;width:300px;top:214.79999999999995px;font-size:11px;color:#000;">0%</div>
<div class="t r" style="left:772.5px;width:300px;top:214.79999999999995px;font-size:11px;color:#000;">0.0</div>
<div class="t r" style="left:849.5px;width:300px;top:214.79999999999995px;font-size:11px;color:#000;">0</div>
<div class="t r" style="left:907.5px;width:300px;top:214.79999999999995px;font-size:11px;color:#000;">5,149</div>
<div style="position:absolute;left:74px;top:232px;width:19px;height:22px;background:#5c4008"></div>
<div style="position:absolute;left:93px;top:254px;width:1119px;height:1px;background:#d9d9d9"></div>
<div style="position:absolute;left:93px;top:232px;width:1px;height:23px;background:#d9d9d9"></div>
<div style="position:absolute;left:187px;top:232px;width:1px;height:23px;background:#d9d9d9"></div>
<div style="position:absolute;left:282px;top:232px;width:1px;height:23px;background:#d9d9d9"></div>
<div style="position:absolute;left:375px;top:232px;width:1px;height:23px;background:#d9d9d9"></div>
<div style="position:absolute;left:429px;top:232px;width:1px;height:23px;background:#d9d9d9"></div>
<div style="position:absolute;left:494px;top:232px;width:1px;height:23px;background:#d9d9d9"></div>
<div style="position:absolute;left:584px;top:232px;width:1px;height:23px;background:#d9d9d9"></div>
<div style="position:absolute;left:674px;top:232px;width:1px;height:23px;background:#d9d9d9"></div>
<div style="position:absolute;left:734px;top:232px;width:1px;height:23px;background:#d9d9d9"></div>
<div style="position:absolute;left:812px;top:232px;width:1px;height:23px;background:#d9d9d9"></div>
<div style="position:absolute;left:902px;top:232px;width:1px;height:23px;background:#d9d9d9"></div>
<div style="position:absolute;left:1016px;top:232px;width:1px;height:23px;background:#d9d9d9"></div>
<div style="position:absolute;left:1076px;top:232px;width:1px;height:23px;background:#d9d9d9"></div>
<div style="position:absolute;left:1153px;top:232px;width:1px;height:23px;background:#d9d9d9"></div>
<div style="position:absolute;left:1211px;top:232px;width:1px;height:23px;background:#d9d9d9"></div>
<div class="t" style="left:97.5px;top:237.79999999999995px;font-size:11px;color:#000;letter-spacing:-0.45px">LONDONSQL01...</div>
<div class="t" style="left:191.5px;top:237.79999999999995px;font-size:11px;color:#000;">AutoDealership...</div>
<div class="t" style="left:286.5px;top:237.79999999999995px;font-size:11px;color:#000;">AutoDealership...</div>
<div class="t" style="left:379.5px;top:237.79999999999995px;font-size:11px;color:#000;">Transa...</div>
<div class="t r" style="left:190.5px;width:300px;top:237.79999999999995px;font-size:11px;color:#000;">281</div>
<div class="t r" style="left:280.5px;width:300px;top:237.79999999999995px;font-size:11px;color:#000;">0</div>
<div class="t r" style="left:370.5px;width:300px;top:237.79999999999995px;font-size:11px;color:#000;">0%</div>
<div class="t r" style="left:430.5px;width:300px;top:237.79999999999995px;font-size:11px;color:#000;">0.0</div>
<div class="t r" style="left:508.5px;width:300px;top:237.79999999999995px;font-size:11px;color:#000;">0</div>
<div class="t r" style="left:598.5px;width:300px;top:237.79999999999995px;font-size:11px;color:#000;">0</div>
<div class="t r" style="left:712.5px;width:300px;top:237.79999999999995px;font-size:11px;color:#000;">0%</div>
<div class="t r" style="left:772.5px;width:300px;top:237.79999999999995px;font-size:11px;color:#000;">0.0</div>
<div class="t r" style="left:849.5px;width:300px;top:237.79999999999995px;font-size:11px;color:#000;">0</div>
<div class="t r" style="left:907.5px;width:300px;top:237.79999999999995px;font-size:11px;color:#000;">3</div>
<div style="position:absolute;left:74px;top:255px;width:19px;height:22px;background:#ff6347"></div>
<div style="position:absolute;left:93px;top:277px;width:1119px;height:1px;background:#d9d9d9"></div>
<div style="position:absolute;left:93px;top:255px;width:1px;height:23px;background:#d9d9d9"></div>
<div style="position:absolute;left:187px;top:255px;width:1px;height:23px;background:#d9d9d9"></div>
<div style="position:absolute;left:282px;top:255px;width:1px;height:23px;background:#d9d9d9"></div>
<div style="position:absolute;left:375px;top:255px;width:1px;height:23px;background:#d9d9d9"></div>
<div style="position:absolute;left:429px;top:255px;width:1px;height:23px;background:#d9d9d9"></div>
<div style="position:absolute;left:494px;top:255px;width:1px;height:23px;background:#d9d9d9"></div>
<div style="position:absolute;left:584px;top:255px;width:1px;height:23px;background:#d9d9d9"></div>
<div style="position:absolute;left:674px;top:255px;width:1px;height:23px;background:#d9d9d9"></div>
<div style="position:absolute;left:734px;top:255px;width:1px;height:23px;background:#d9d9d9"></div>
<div style="position:absolute;left:812px;top:255px;width:1px;height:23px;background:#d9d9d9"></div>
<div style="position:absolute;left:902px;top:255px;width:1px;height:23px;background:#d9d9d9"></div>
<div style="position:absolute;left:1016px;top:255px;width:1px;height:23px;background:#d9d9d9"></div>
<div style="position:absolute;left:1076px;top:255px;width:1px;height:23px;background:#d9d9d9"></div>
<div style="position:absolute;left:1153px;top:255px;width:1px;height:23px;background:#d9d9d9"></div>
<div style="position:absolute;left:1211px;top:255px;width:1px;height:23px;background:#d9d9d9"></div>
<div class="t" style="left:97.5px;top:260.79999999999995px;font-size:11px;color:#000;letter-spacing:-0.45px">LONDONSQL01...</div>
<div class="t" style="left:191.5px;top:260.79999999999995px;font-size:11px;color:#000;">Catawba</div>
<div class="t" style="left:286.5px;top:260.79999999999995px;font-size:11px;color:#000;">Catawba_log</div>
<div class="t" style="left:379.5px;top:260.79999999999995px;font-size:11px;color:#000;">Transa...</div>
<div class="t r" style="left:190.5px;width:300px;top:260.79999999999995px;font-size:11px;color:#000;">6</div>
<div class="t r" style="left:280.5px;width:300px;top:260.79999999999995px;font-size:11px;color:#000;">0</div>
<div class="t r" style="left:370.5px;width:300px;top:260.79999999999995px;font-size:11px;color:#000;">0%</div>
<div class="t r" style="left:430.5px;width:300px;top:260.79999999999995px;font-size:11px;color:#000;">0.0</div>
<div class="t r" style="left:508.5px;width:300px;top:260.79999999999995px;font-size:11px;color:#000;">0</div>
<div class="t r" style="left:598.5px;width:300px;top:260.79999999999995px;font-size:11px;color:#000;">0</div>
<div class="t r" style="left:712.5px;width:300px;top:260.79999999999995px;font-size:11px;color:#000;">0%</div>
<div class="t r" style="left:772.5px;width:300px;top:260.79999999999995px;font-size:11px;color:#000;">0.0</div>
<div class="t r" style="left:849.5px;width:300px;top:260.79999999999995px;font-size:11px;color:#000;">0</div>
<div class="t r" style="left:907.5px;width:300px;top:260.79999999999995px;font-size:11px;color:#000;">8</div>
<div style="position:absolute;left:74px;top:278px;width:19px;height:1px;background:#6495ed"></div>
<div style="position:absolute;left:2531px;top:1px;width:23px;height:278px;background:#fff;border-left:1px solid #c0c0c0;border-right:1px solid #c0c0c0;box-sizing:border-box"></div>
<div style="position:absolute;left:2529px;top:1px;width:2px;height:278px;background:#a8a8a8"></div>
<div style="position:absolute;left:2532px;top:21px;width:21px;height:1px;background:#d4d4d4"></div>
<div style="position:absolute;left:2532px;top:258px;width:21px;height:1px;background:#d4d4d4"></div>
<div style="position:absolute;left:2532px;top:157px;width:21px;height:37px;background:#dadada;border-top:1px solid #c4c4c4;border-bottom:1px solid #c4c4c4;box-sizing:border-box"></div>
<svg style="position:absolute;left:2537px;top:6px" width="12" height="10" viewBox="0 0 12 10"><path d="M2,7 L6,3 L10,7" fill="none" stroke="#606060" stroke-width="1.4"/></svg>
<svg style="position:absolute;left:2537px;top:264px" width="12" height="10" viewBox="0 0 12 10"><path d="M2,3 L6,7 L10,3" fill="none" stroke="#606060" stroke-width="1.4"/></svg>
<div style="position:absolute;left:2538px;top:170px;width:9px;height:2px;background:#606060"></div>
<div style="position:absolute;left:2538px;top:174px;width:9px;height:2px;background:#606060"></div>
<div style="position:absolute;left:2538px;top:178px;width:9px;height:2px;background:#606060"></div>
</div>
<div style="position:absolute;left:3px;top:866px;width:2554px;height:1px;background:#fafafa"></div>
<div style="position:absolute;left:3px;top:881px;width:2554px;height:273px;background:#f3f3f3"></div>
<div style="position:absolute;left:1271px;top:872px;width:2px;height:2px;background:#444"></div>
<div style="position:absolute;left:1275px;top:872px;width:2px;height:2px;background:#444"></div>
<div style="position:absolute;left:1279px;top:872px;width:2px;height:2px;background:#444"></div>
<div style="position:absolute;left:1283px;top:872px;width:2px;height:2px;background:#444"></div>
<div style="position:absolute;left:1287px;top:872px;width:2px;height:2px;background:#444"></div>
<div style="position:absolute;left:10px;top:888px;width:82px;height:22px;box-sizing:border-box;border:1px solid #6e6e6e;background:#ececec;box-shadow:inset 0 0 0 2px #dedede"></div>
<div class="t" style="left:17px;top:894px;font-size:12px;color:#1a1a2a">Disk 1 (Disk)</div>
<div style="position:absolute;left:100px;top:888px;width:187px;height:22px;box-sizing:border-box;border:1px solid #6e6e6e;background:#add8e6;box-shadow:inset 0 0 0 2px #dcdcdc"></div>
<div class="t" style="left:107px;top:894px;font-size:12.5px;color:#1a1a2a">Sweetwater (SQL Server Data)</div>
<div class="t" style="left:7px;top:923.5px;font-size:11px;color:#1a1a2a">Latency (ms)</div>
<div class="t" style="left:858px;top:923.5px;font-size:11px;color:#1a1a2a">IOPS</div>
<div class="t" style="left:1709px;top:923.5px;font-size:11px;color:#1a1a2a">MB/sec</div>
<svg style="position:absolute;left:0;top:915px" width="2560" height="239" viewBox="0 915 2560 239">
<rect x="8.5" y="939.5" width="840" height="210" fill="#fff" stroke="#a0a0a0" stroke-width="1"/>
<rect x="43" y="1055" width="794" height="1" fill="#d9d9d9"/>
<rect x="43" y="1027" width="794" height="1" fill="#d9d9d9"/>
<rect x="43" y="999" width="794" height="1" fill="#d9d9d9"/>
<rect x="43" y="971" width="794" height="1" fill="#d9d9d9"/>
<rect x="42.5" y="950.5" width="795" height="133" fill="none" stroke="#a8a8a8" stroke-width="1"/>
<rect x="40" y="1074" width="2" height="1" fill="#a8a8a8"/>
<rect x="40" y="1064" width="2" height="1" fill="#a8a8a8"/>
<rect x="40" y="1046" width="2" height="1" fill="#a8a8a8"/>
<rect x="40" y="1036" width="2" height="1" fill="#a8a8a8"/>
<rect x="40" y="1018" width="2" height="1" fill="#a8a8a8"/>
<rect x="40" y="1008" width="2" height="1" fill="#a8a8a8"/>
<rect x="40" y="990" width="2" height="1" fill="#a8a8a8"/>
<rect x="40" y="980" width="2" height="1" fill="#a8a8a8"/>
<rect x="40" y="962" width="2" height="1" fill="#a8a8a8"/>
<rect x="40" y="952" width="2" height="1" fill="#a8a8a8"/>
<rect x="37" y="1083" width="5" height="1" fill="#a8a8a8"/>
<text x="30.5" y="1087.2" text-anchor="end" font-size="13" fill="#1a1a2a">0</text>
<rect x="37" y="1055" width="5" height="1" fill="#a8a8a8"/>
<text x="30.5" y="1059.2" text-anchor="end" font-size="13" fill="#1a1a2a">3</text>
<rect x="37" y="1027" width="5" height="1" fill="#a8a8a8"/>
<text x="30.5" y="1031.2" text-anchor="end" font-size="13" fill="#1a1a2a">6</text>
<rect x="37" y="999" width="5" height="1" fill="#a8a8a8"/>
<text x="30.5" y="1003.2" text-anchor="end" font-size="13" fill="#1a1a2a">9</text>
<rect x="37" y="971" width="5" height="1" fill="#a8a8a8"/>
<text x="30.5" y="975.2" text-anchor="end" font-size="13" fill="#1a1a2a">12</text>
<rect x="95" y="1084" width="1" height="5" fill="#a8a8a8"/>
<text x="95.5" y="1105" text-anchor="middle" font-size="13" fill="#1a1a2a">3:40:00 PM</text>
<rect x="201" y="1084" width="1" height="5" fill="#a8a8a8"/>
<text x="201.5" y="1105" text-anchor="middle" font-size="13" fill="#1a1a2a">3:44:00 PM</text>
<rect x="307" y="1084" width="1" height="5" fill="#a8a8a8"/>
<text x="307.5" y="1105" text-anchor="middle" font-size="13" fill="#1a1a2a">3:48:00 PM</text>
<rect x="413" y="1084" width="1" height="5" fill="#a8a8a8"/>
<text x="413.5" y="1105" text-anchor="middle" font-size="13" fill="#1a1a2a">3:52:00 PM</text>
<rect x="519" y="1084" width="1" height="5" fill="#a8a8a8"/>
<text x="519.5" y="1105" text-anchor="middle" font-size="13" fill="#1a1a2a">3:56:00 PM</text>
<rect x="625" y="1084" width="1" height="5" fill="#a8a8a8"/>
<text x="625.5" y="1105" text-anchor="middle" font-size="13" fill="#1a1a2a">4:00:00 PM</text>
<rect x="731" y="1084" width="1" height="5" fill="#a8a8a8"/>
<text x="731.5" y="1105" text-anchor="middle" font-size="13" fill="#1a1a2a">4:04:00 PM</text>
<rect x="837" y="1084" width="1" height="5" fill="#a8a8a8"/>
<text x="840" y="1105" text-anchor="end" font-size="13" fill="#1a1a2a">4:08:00 PM</text>
<line x1="43" y1="1082.5" x2="837" y2="1082.5" stroke="#90ee90" stroke-width="1.2"/>
<polyline points="77.9,1082.5 86.6,963.2 95.5,1082.5" fill="none" stroke="#90ee90" stroke-width="2.2" stroke-linejoin="miter"/>
<rect x="366.5" y="1115.5" width="123" height="23" fill="#fff" stroke="#a8a8a8" stroke-width="1"/>
<rect x="369" y="1126" width="21" height="1" fill="#90ee90"/>
<text x="393" y="1131" font-size="12.5" fill="#1a1a2a">Read</text>
<rect x="429" y="1126" width="21" height="1" fill="#20a0b0"/>
<text x="453" y="1131" font-size="13" fill="#1a1a2a">Write</text>
<rect x="859.5" y="939.5" width="840" height="210" fill="#fff" stroke="#a0a0a0" stroke-width="1"/>
<rect x="887" y="1059" width="801" height="1" fill="#d9d9d9"/>
<rect x="887" y="1035" width="801" height="1" fill="#d9d9d9"/>
<rect x="887" y="1010" width="801" height="1" fill="#d9d9d9"/>
<rect x="887" y="986" width="801" height="1" fill="#d9d9d9"/>
<rect x="887" y="962" width="801" height="1" fill="#d9d9d9"/>
<rect x="886.5" y="950.5" width="802" height="133" fill="none" stroke="#a8a8a8" stroke-width="1"/>
<rect x="884" y="1075" width="2" height="1" fill="#a8a8a8"/>
<rect x="884" y="1067" width="2" height="1" fill="#a8a8a8"/>
<rect x="884" y="1051" width="2" height="1" fill="#a8a8a8"/>
<rect x="884" y="1043" width="2" height="1" fill="#a8a8a8"/>
<rect x="884" y="1027" width="2" height="1" fill="#a8a8a8"/>
<rect x="884" y="1018" width="2" height="1" fill="#a8a8a8"/>
<rect x="884" y="1002" width="2" height="1" fill="#a8a8a8"/>
<rect x="884" y="994" width="2" height="1" fill="#a8a8a8"/>
<rect x="884" y="978" width="2" height="1" fill="#a8a8a8"/>
<rect x="884" y="970" width="2" height="1" fill="#a8a8a8"/>
<rect x="884" y="954" width="2" height="1" fill="#a8a8a8"/>
<rect x="881" y="1083" width="5" height="1" fill="#a8a8a8"/>
<text x="874.5" y="1087.2" text-anchor="end" font-size="13" fill="#1a1a2a">0</text>
<rect x="881" y="1059" width="5" height="1" fill="#a8a8a8"/>
<text x="874.5" y="1063.2" text-anchor="end" font-size="13" fill="#1a1a2a">0</text>
<rect x="881" y="1035" width="5" height="1" fill="#a8a8a8"/>
<text x="874.5" y="1039.2" text-anchor="end" font-size="13" fill="#1a1a2a">0</text>
<rect x="881" y="1010" width="5" height="1" fill="#a8a8a8"/>
<text x="874.5" y="1014.2" text-anchor="end" font-size="13" fill="#1a1a2a">0</text>
<rect x="881" y="986" width="5" height="1" fill="#a8a8a8"/>
<text x="874.5" y="990.2" text-anchor="end" font-size="13" fill="#1a1a2a">0</text>
<rect x="881" y="962" width="5" height="1" fill="#a8a8a8"/>
<text x="874.5" y="966.2" text-anchor="end" font-size="13" fill="#1a1a2a">0</text>
<rect x="939" y="1084" width="1" height="5" fill="#a8a8a8"/>
<text x="939.5" y="1105" text-anchor="middle" font-size="13" fill="#1a1a2a">3:40:00 PM</text>
<rect x="1046" y="1084" width="1" height="5" fill="#a8a8a8"/>
<text x="1046.5" y="1105" text-anchor="middle" font-size="13" fill="#1a1a2a">3:44:00 PM</text>
<rect x="1153" y="1084" width="1" height="5" fill="#a8a8a8"/>
<text x="1153.5" y="1105" text-anchor="middle" font-size="13" fill="#1a1a2a">3:48:00 PM</text>
<rect x="1260" y="1084" width="1" height="5" fill="#a8a8a8"/>
<text x="1260.5" y="1105" text-anchor="middle" font-size="13" fill="#1a1a2a">3:52:00 PM</text>
<rect x="1367" y="1084" width="1" height="5" fill="#a8a8a8"/>
<text x="1367.5" y="1105" text-anchor="middle" font-size="13" fill="#1a1a2a">3:56:00 PM</text>
<rect x="1474" y="1084" width="1" height="5" fill="#a8a8a8"/>
<text x="1474.5" y="1105" text-anchor="middle" font-size="13" fill="#1a1a2a">4:00:00 PM</text>
<rect x="1581" y="1084" width="1" height="5" fill="#a8a8a8"/>
<text x="1581.5" y="1105" text-anchor="middle" font-size="13" fill="#1a1a2a">4:04:00 PM</text>
<rect x="1688" y="1084" width="1" height="5" fill="#a8a8a8"/>
<text x="1691" y="1105" text-anchor="end" font-size="13" fill="#1a1a2a">4:08:00 PM</text>
<path d="M922.2,1083 L931.1,962.4 L940,1083 Z" fill="#90ee90"/>
<rect x="1217.5" y="1115.5" width="123" height="23" fill="#fff" stroke="#a8a8a8" stroke-width="1"/>
<path d="M1220.3,1136 L1226.8,1122 Q1230.6,1116 1234.3999999999999,1122 L1240.8999999999999,1136 Z" fill="#98f598"/>
<text x="1244" y="1131" font-size="12.5" fill="#1a1a2a">Read</text>
<path d="M1280.3,1136 L1286.8,1122 Q1290.6,1116 1294.3999999999999,1122 L1300.8999999999999,1136 Z" fill="#20b2aa"/>
<text x="1304" y="1131" font-size="13" fill="#1a1a2a">Write</text>
<rect x="1710.5" y="939.5" width="841" height="210" fill="#fff" stroke="#a0a0a0" stroke-width="1"/>
<rect x="1738" y="1044" width="802" height="1" fill="#d9d9d9"/>
<rect x="1738" y="1006" width="802" height="1" fill="#d9d9d9"/>
<rect x="1738" y="967" width="802" height="1" fill="#d9d9d9"/>
<rect x="1737.5" y="950.5" width="803" height="133" fill="none" stroke="#a8a8a8" stroke-width="1"/>
<rect x="1735" y="1070" width="2" height="1" fill="#a8a8a8"/>
<rect x="1735" y="1057" width="2" height="1" fill="#a8a8a8"/>
<rect x="1735" y="1031" width="2" height="1" fill="#a8a8a8"/>
<rect x="1735" y="1019" width="2" height="1" fill="#a8a8a8"/>
<rect x="1735" y="993" width="2" height="1" fill="#a8a8a8"/>
<rect x="1735" y="980" width="2" height="1" fill="#a8a8a8"/>
<rect x="1735" y="954" width="2" height="1" fill="#a8a8a8"/>
<rect x="1732" y="1083" width="5" height="1" fill="#a8a8a8"/>
<text x="1725.5" y="1087.2" text-anchor="end" font-size="13" fill="#1a1a2a">0</text>
<rect x="1732" y="1044" width="5" height="1" fill="#a8a8a8"/>
<text x="1725.5" y="1048.2" text-anchor="end" font-size="13" fill="#1a1a2a">0</text>
<rect x="1732" y="1006" width="5" height="1" fill="#a8a8a8"/>
<text x="1725.5" y="1010.2" text-anchor="end" font-size="13" fill="#1a1a2a">0</text>
<rect x="1732" y="967" width="5" height="1" fill="#a8a8a8"/>
<text x="1725.5" y="971.2" text-anchor="end" font-size="13" fill="#1a1a2a">0</text>
<rect x="1791" y="1084" width="1" height="5" fill="#a8a8a8"/>
<text x="1791.5" y="1105" text-anchor="middle" font-size="13" fill="#1a1a2a">3:40:00 PM</text>
<rect x="1898" y="1084" width="1" height="5" fill="#a8a8a8"/>
<text x="1898.5" y="1105" text-anchor="middle" font-size="13" fill="#1a1a2a">3:44:00 PM</text>
<rect x="2005" y="1084" width="1" height="5" fill="#a8a8a8"/>
<text x="2005.5" y="1105" text-anchor="middle" font-size="13" fill="#1a1a2a">3:48:00 PM</text>
<rect x="2112" y="1084" width="1" height="5" fill="#a8a8a8"/>
<text x="2112.5" y="1105" text-anchor="middle" font-size="13" fill="#1a1a2a">3:52:00 PM</text>
<rect x="2219" y="1084" width="1" height="5" fill="#a8a8a8"/>
<text x="2219.5" y="1105" text-anchor="middle" font-size="13" fill="#1a1a2a">3:56:00 PM</text>
<rect x="2326" y="1084" width="1" height="5" fill="#a8a8a8"/>
<text x="2326.5" y="1105" text-anchor="middle" font-size="13" fill="#1a1a2a">4:00:00 PM</text>
<rect x="2433" y="1084" width="1" height="5" fill="#a8a8a8"/>
<text x="2433.5" y="1105" text-anchor="middle" font-size="13" fill="#1a1a2a">4:04:00 PM</text>
<rect x="2540" y="1084" width="1" height="5" fill="#a8a8a8"/>
<text x="2543" y="1105" text-anchor="end" font-size="13" fill="#1a1a2a">4:08:00 PM</text>
<path d="M1773,1083 L1782,963 L1791,1083 Z" fill="#90ee90"/>
<rect x="2068.5" y="1115.5" width="123" height="23" fill="#fff" stroke="#a8a8a8" stroke-width="1"/>
<path d="M2071.3,1136 L2077.8,1122 Q2081.6000000000004,1116 2085.4,1122 L2091.9,1136 Z" fill="#98f598"/>
<text x="2095" y="1131" font-size="12.5" fill="#1a1a2a">Read</text>
<path d="M2131.3,1136 L2137.8,1122 Q2141.6000000000004,1116 2145.4,1122 L2151.9,1136 Z" fill="#20b2aa"/>
<text x="2155" y="1131" font-size="13" fill="#1a1a2a">Write</text>
</svg>
</body></html>
